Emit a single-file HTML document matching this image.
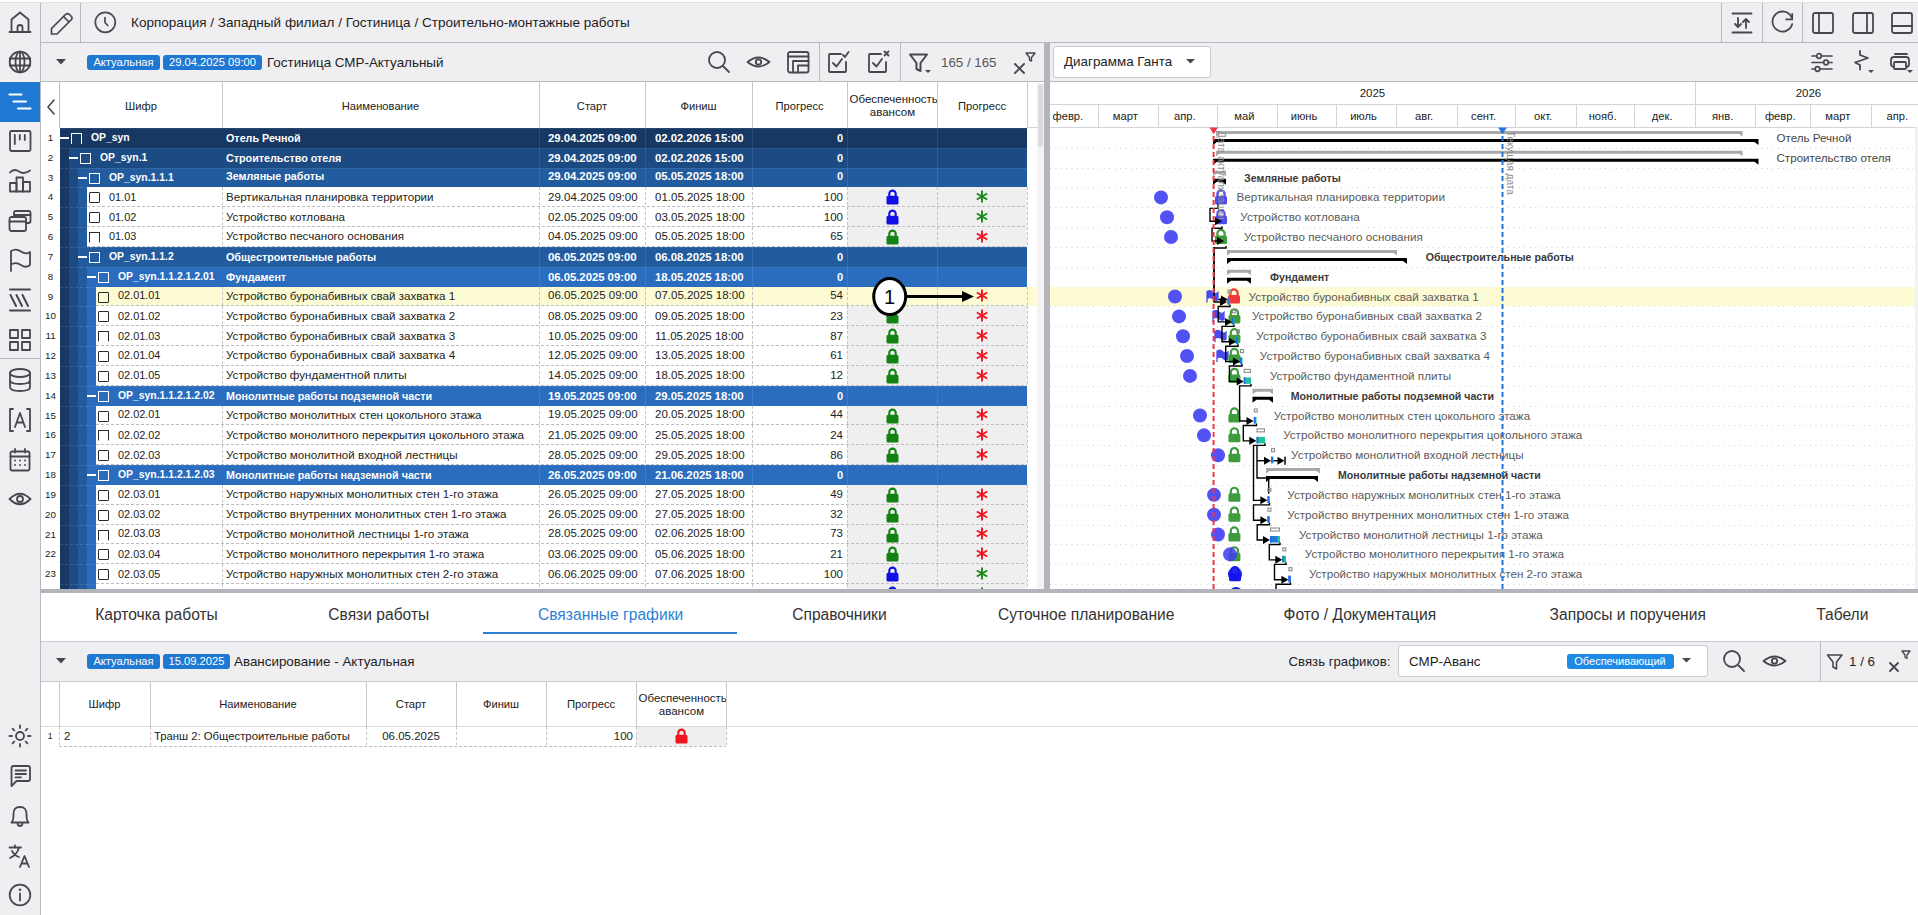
<!DOCTYPE html><html><head><meta charset="utf-8"><style>
html,body{margin:0;padding:0;}
body{width:1918px;height:915px;overflow:hidden;position:relative;background:#fff;font-family:"Liberation Sans",sans-serif;color:#222;}
div{box-sizing:border-box;}
svg{display:block}
</style></head><body>
<div style="position:absolute;left:0px;top:0px;width:1918px;height:2px;background:#fff"></div>
<div style="position:absolute;left:0px;top:2px;width:1918px;height:1px;background:#e3e3e6"></div>
<div style="position:absolute;left:0px;top:3px;width:1918px;height:39px;background:#efeff2"></div>
<div style="position:absolute;left:41px;top:42px;width:1877px;height:1px;background:#b9bac1"></div>
<div style="position:absolute;left:41px;top:43px;width:1877px;height:38px;background:#efeff2"></div>
<div style="position:absolute;left:41px;top:81px;width:1877px;height:1px;background:#b9bac1"></div>
<div style="position:absolute;left:0px;top:3px;width:40px;height:912px;background:#efeff2"></div>
<div style="position:absolute;left:40px;top:3px;width:1px;height:912px;background:#b9bac1"></div>
<div style="position:absolute;left:0px;top:82px;width:40px;height:40px;background:#1f78d1"></div>
<div style="position:absolute;left:0px;top:358px;width:40px;height:1px;background:#b9bac1"></div>
<div style="position:absolute;left:80px;top:3px;width:1px;height:39px;background:#b9bac1"></div>
<div style="position:absolute;left:1721px;top:3px;width:1px;height:39px;background:#b9bac1"></div>
<div style="position:absolute;left:1762px;top:3px;width:1px;height:39px;background:#b9bac1"></div>
<div style="position:absolute;left:1802px;top:3px;width:1px;height:39px;background:#b9bac1"></div>
<svg style="position:absolute;left:48px;top:10px;overflow:visible" width="26" height="26" viewBox="0 0 26 26" fill="none" stroke="#47474d" stroke-width="1.7" stroke-linecap="round" stroke-linejoin="round" ><path d="M3.5 23.5 L3.5 18.5 L17.5 4.5 Q19.5 2.5 21.5 4.5 L23 6 Q25 8 23 10 L9 24 L3.5 24 Z"/><path d="M15.5 6.5 L21 12"/></svg>
<svg style="position:absolute;left:93px;top:10px;overflow:visible" width="24" height="24" viewBox="0 0 24 24" fill="none" stroke="#47474d" stroke-width="1.7" stroke-linecap="round" stroke-linejoin="round" ><circle cx="12.3" cy="12.3" r="10"/><path d="M12 7.5 L12 12.5 L14.8 15.5"/></svg>
<div style="position:absolute;left:131px;top:13.7px;height:18px;line-height:18px;white-space:nowrap;font-size:13.55px;color:#1e1e1e">Корпорация / Западный филиал / Гостиница / Строительно-монтажные работы</div>
<svg style="position:absolute;left:1731px;top:12px;overflow:visible" width="22" height="22" viewBox="0 0 22 22" fill="none" stroke="#47474d" stroke-width="1.8" stroke-linecap="round" stroke-linejoin="round" ><path d="M1.5 1.5 H20.5 M1.5 20.5 H20.5"/><path d="M7 6 V15 M4 12 L7 15 L10 12"/><path d="M15 16 V7 M12 10 L15 7 L18 10"/></svg>
<svg style="position:absolute;left:1771.4px;top:11.4px;overflow:visible" width="22" height="22" viewBox="0 0 22 22" fill="none" stroke="#47474d" stroke-width="1.8" stroke-linecap="round" stroke-linejoin="round" ><path d="M21.2 13.1 A10 10 0 1 1 20.5 6.1"/><path d="M21.2 2.8 V8.4 H15.2"/></svg>
<svg style="position:absolute;left:1811.5px;top:11.5px;overflow:visible" width="22" height="22" viewBox="0 0 22 22" fill="none" stroke="#47474d" stroke-width="1.8" stroke-linecap="round" stroke-linejoin="round" ><rect x="1" y="1" width="20" height="20" rx="2"/><path d="M7 1 V21"/></svg>
<svg style="position:absolute;left:1851.5px;top:11.5px;overflow:visible" width="22" height="22" viewBox="0 0 22 22" fill="none" stroke="#47474d" stroke-width="1.8" stroke-linecap="round" stroke-linejoin="round" ><rect x="1" y="1" width="20" height="20" rx="2"/><path d="M15 1 V21"/></svg>
<svg style="position:absolute;left:1891px;top:11.5px;overflow:visible" width="22" height="22" viewBox="0 0 22 22" fill="none" stroke="#47474d" stroke-width="1.8" stroke-linecap="round" stroke-linejoin="round" ><rect x="1" y="1" width="20" height="20" rx="2"/><path d="M1 14 H21"/></svg>
<svg style="position:absolute;left:8px;top:10px;overflow:visible" width="24" height="24" viewBox="0 0 24 24" fill="none" stroke="#47474d" stroke-width="1.8" stroke-linecap="round" stroke-linejoin="round" ><path d="M1.5 22 H22.5"/><path d="M3.5 22 V9.5 L12 2.5 L20.5 9.5 V22"/><path d="M9.5 22 V17.5 A2.5 2.5 0 0 1 14.5 17.5 V22"/></svg>
<svg style="position:absolute;left:8px;top:50px;overflow:visible" width="24" height="24" viewBox="0 0 24 24" fill="none" stroke="#47474d" stroke-width="1.8" stroke-linecap="round" stroke-linejoin="round" ><circle cx="12" cy="12" r="10.3"/><ellipse cx="12" cy="12" rx="4.5" ry="10.3"/><path d="M1.7 8.5 H22.3 M1.7 15.5 H22.3 M12 1.7 V22.3"/></svg>
<svg style="position:absolute;left:8px;top:90px;overflow:visible" width="24" height="24" viewBox="0 0 24 24" fill="none" stroke="#fff" stroke-width="2.2" stroke-linecap="round" stroke-linejoin="round" ><path d="M1.5 4.5 H13.5 M5.5 11.5 H18 M10 18.5 H22.5"/></svg>
<svg style="position:absolute;left:8px;top:129px;overflow:visible" width="24" height="24" viewBox="0 0 24 24" fill="none" stroke="#47474d" stroke-width="1.8" stroke-linecap="round" stroke-linejoin="round" ><rect x="2" y="2" width="20.5" height="20" rx="1.5"/><path d="M6.8 6 V15 M11.8 6 V10.5 M16.8 6 V11"/></svg>
<svg style="position:absolute;left:8px;top:169px;overflow:visible" width="24" height="24" viewBox="0 0 24 24" fill="none" stroke="#47474d" stroke-width="1.8" stroke-linecap="round" stroke-linejoin="round" ><path d="M2 3.5 Q6 -1 11 2.5 Q16 6 22 1.5"/><rect x="2" y="14" width="6.5" height="8.5"/><rect x="8.5" y="8.5" width="6.5" height="14"/><rect x="15" y="13" width="7" height="9.5"/></svg>
<svg style="position:absolute;left:8px;top:209px;overflow:visible" width="24" height="24" viewBox="0 0 24 24" fill="none" stroke="#47474d" stroke-width="1.8" stroke-linecap="round" stroke-linejoin="round" ><path d="M6 6 V4 Q6 2 8 2 H20.5 Q22.5 2 22.5 4 V12 Q22.5 14 20.5 14 H18"/><rect x="1.5" y="8" width="16.5" height="14" rx="2"/><path d="M1.5 12.5 H18"/><path d="M6 6 H22.5"/></svg>
<svg style="position:absolute;left:8px;top:248px;overflow:visible" width="24" height="24" viewBox="0 0 24 24" fill="none" stroke="#47474d" stroke-width="1.8" stroke-linecap="round" stroke-linejoin="round" ><path d="M3 23 V3 Q8 0 13 3.5 Q18 7 22 4 V17 Q18 20.5 13 17 Q8 13.5 3 16.5"/></svg>
<svg style="position:absolute;left:8px;top:288px;overflow:visible" width="24" height="24" viewBox="0 0 24 24" fill="none" stroke="#47474d" stroke-width="2" stroke-linecap="round" stroke-linejoin="round" ><path d="M2 1.5 H22 M2 22.5 H22"/><path d="M2.5 7 L8 18 M8.5 7 L14 18 M14.5 7 L20 18"/></svg>
<svg style="position:absolute;left:8px;top:328px;overflow:visible" width="24" height="24" viewBox="0 0 24 24" fill="none" stroke="#47474d" stroke-width="1.8" stroke-linecap="round" stroke-linejoin="round" ><rect x="2" y="2" width="8" height="8"/><rect x="14" y="2" width="8" height="8"/><rect x="2" y="14" width="8" height="8"/><rect x="14" y="14" width="8" height="8"/></svg>
<svg style="position:absolute;left:8px;top:368px;overflow:visible" width="24" height="24" viewBox="0 0 24 24" fill="none" stroke="#47474d" stroke-width="1.8" stroke-linecap="round" stroke-linejoin="round" ><ellipse cx="12" cy="5" rx="10" ry="4"/><path d="M2 5 V19 Q2 23 12 23 Q22 23 22 19 V5 M2 12 Q2 16 12 16 Q22 16 22 12"/></svg>
<svg style="position:absolute;left:8px;top:408px;overflow:visible" width="24" height="24" viewBox="0 0 24 24" fill="none" stroke="#47474d" stroke-width="1.8" stroke-linecap="round" stroke-linejoin="round" ><path d="M5 1 H2 V23 H5 M19 1 H22 V23 H19"/><path d="M7 19 L12 5 L17 19 M8.6 14.5 H15.4"/></svg>
<svg style="position:absolute;left:8px;top:448px;overflow:visible" width="24" height="24" viewBox="0 0 24 24" fill="none" stroke="#47474d" stroke-width="1.8" stroke-linecap="round" stroke-linejoin="round" ><rect x="2.5" y="3.5" width="19" height="19" rx="1.5"/><path d="M2.5 8.5 H21.5 M7 1 V4.5 M17 1 V4.5"/><path d="M7 12.5 h0.1 M12 12.5 h0.1 M17 12.5 h0.1 M7 17 h0.1 M12 17 h0.1 M17 17 h0.1"/></svg>
<svg style="position:absolute;left:8px;top:487px;overflow:visible" width="24" height="24" viewBox="0 0 24 24" fill="none" stroke="#47474d" stroke-width="1.8" stroke-linecap="round" stroke-linejoin="round" ><path d="M1.5 12 Q12 1.5 22.5 12 Q12 22.5 1.5 12 Z"/><circle cx="12" cy="12" r="3"/></svg>
<svg style="position:absolute;left:8px;top:724px;overflow:visible" width="24" height="24" viewBox="0 0 24 24" fill="none" stroke="#47474d" stroke-width="1.8" stroke-linecap="round" stroke-linejoin="round" ><circle cx="12" cy="12" r="4"/><path d="M12 1.5 V4 M12 20 V22.5 M1.5 12 H4 M20 12 H22.5 M4.6 4.6 L6.3 6.3 M17.7 17.7 L19.4 19.4 M4.6 19.4 L6.3 17.7 M17.7 6.3 L19.4 4.6"/></svg>
<svg style="position:absolute;left:8px;top:764px;overflow:visible" width="24" height="24" viewBox="0 0 24 24" fill="none" stroke="#47474d" stroke-width="1.8" stroke-linecap="round" stroke-linejoin="round" ><path d="M3.5 22 V4 Q3.5 2 5.5 2 H20 Q22 2 22 4 V15 Q22 17 20 17 H8.5 Z"/><path d="M7.5 6.5 H18 M7.5 10 H18 M7.5 13.3 H13"/></svg>
<svg style="position:absolute;left:8px;top:804px;overflow:visible" width="24" height="24" viewBox="0 0 24 24" fill="none" stroke="#47474d" stroke-width="1.8" stroke-linecap="round" stroke-linejoin="round" ><path d="M3.5 18.5 H20.5 Q18.5 16.5 18.5 12 V10 Q18.5 3 12 3 Q5.5 3 5.5 10 V12 Q5.5 16.5 3.5 18.5 Z"/><path d="M9.5 19 Q9.5 22 12 22 Q14.5 22 14.5 19"/></svg>
<svg style="position:absolute;left:8px;top:844px;overflow:visible" width="24" height="24" viewBox="0 0 24 24" fill="none" stroke="#47474d" stroke-width="1.8" stroke-linecap="round" stroke-linejoin="round" ><path d="M1.5 3.5 H13 M7 1.5 V3.5 M11 3.5 Q9 11 2 14 M4 7 Q7 12 11 13"/><path d="M12 23 L16.5 12 L21 23 M13.5 19.5 H19.5"/></svg>
<svg style="position:absolute;left:8px;top:883px;overflow:visible" width="24" height="24" viewBox="0 0 24 24" fill="none" stroke="#47474d" stroke-width="1.8" stroke-linecap="round" stroke-linejoin="round" ><circle cx="12" cy="12" r="10.3"/><path d="M12 10.5 V17.5"/><path d="M12 6.8 h0.01" stroke-width="2.6"/></svg>
<svg style="position:absolute;left:55px;top:58px;overflow:visible" width="12" height="8" viewBox="0 0 12 8" fill="none" stroke="#47474d" stroke-width="1.7" stroke-linecap="round" stroke-linejoin="round" ><path d="M1 1 H11 L6 6.5 Z" fill="#47474d" stroke="none"/></svg>
<div style="position:absolute;left:87px;top:55px;width:73px;height:15px;background:#1f78d1;border-radius:3px;color:#fff;font-size:11.2px;line-height:15px;text-align:center;white-space:nowrap">Актуальная</div>
<div style="position:absolute;left:163px;top:55px;width:99px;height:15px;background:#1f78d1;border-radius:3px;color:#fff;font-size:11.2px;line-height:15px;text-align:center;white-space:nowrap">29.04.2025 09:00</div>
<div style="position:absolute;left:267px;top:53.5px;height:18px;line-height:18px;white-space:nowrap;font-size:13.4px;color:#1e1e1e">Гостиница СМР-Актуальный</div>
<svg style="position:absolute;left:707px;top:50px;overflow:visible" width="24" height="24" viewBox="0 0 24 24" fill="none" stroke="#47474d" stroke-width="1.8" stroke-linecap="round" stroke-linejoin="round" ><circle cx="10" cy="10" r="8"/><path d="M16 16 L22 22"/></svg>
<svg style="position:absolute;left:746px;top:50px;overflow:visible" width="25" height="24" viewBox="0 0 25 24" fill="none" stroke="#47474d" stroke-width="1.8" stroke-linecap="round" stroke-linejoin="round" ><path d="M1.5 12 Q12.5 3 23.5 12 Q12.5 21 1.5 12 Z"/><circle cx="12.5" cy="12" r="2.7"/></svg>
<svg style="position:absolute;left:787px;top:51px;overflow:visible" width="23" height="23" viewBox="0 0 23 23" fill="none" stroke="#47474d" stroke-width="1.8" stroke-linecap="round" stroke-linejoin="round" ><rect x="1" y="1" width="20.5" height="20.5" rx="2"/><path d="M1 5.5 H21.5 M6 21.5 V10 H21.5 M11 21.5 V14.5 H21.5"/></svg>
<div style="position:absolute;left:819px;top:43px;width:1px;height:38px;background:#b9bac1"></div>
<svg style="position:absolute;left:827px;top:50px;overflow:visible" width="24" height="24" viewBox="0 0 24 24" fill="none" stroke="#47474d" stroke-width="1.8" stroke-linecap="round" stroke-linejoin="round" ><path d="M14 4 H3 Q2 4 2 5 V21 Q2 22 3 22 H18 Q19 22 19 21 V12"/><path d="M6 13 L9.5 16.5 L15 9"/><path d="M16 5 L18 7 L21.5 2"/></svg>
<svg style="position:absolute;left:867px;top:50px;overflow:visible" width="24" height="24" viewBox="0 0 24 24" fill="none" stroke="#47474d" stroke-width="1.8" stroke-linecap="round" stroke-linejoin="round" ><path d="M14 4 H3 Q2 4 2 5 V21 Q2 22 3 22 H18 Q19 22 19 21 V12"/><path d="M6 13 L9.5 16.5 L15 9"/><path d="M17.5 1.5 L21.5 5.5 M21.5 1.5 L17.5 5.5"/></svg>
<div style="position:absolute;left:899.5px;top:43px;width:1px;height:38px;background:#b9bac1"></div>
<svg style="position:absolute;left:908px;top:52px;overflow:visible" width="24" height="24" viewBox="0 0 24 24" fill="none" stroke="#47474d" stroke-width="2" stroke-linecap="round" stroke-linejoin="round" ><path d="M2 2.5 H19 L12.5 11 V19 L8.5 17 V11 Z"/></svg>
<svg style="position:absolute;left:925px;top:70px;overflow:visible" width="6" height="4" viewBox="0 0 6 4" fill="none" stroke="#47474d" stroke-width="1.7" stroke-linecap="round" stroke-linejoin="round" ><path d="M0 0 H6 L3 3 Z" fill="#47474d" stroke="none"/></svg>
<div style="position:absolute;left:941px;top:54px;height:18px;line-height:18px;white-space:nowrap;font-size:13.3px;color:#555">165 / 165</div>
<svg style="position:absolute;left:1013px;top:51px;overflow:visible" width="24" height="26" viewBox="0 0 24 26" fill="none" stroke="#47474d" stroke-width="1.9" stroke-linecap="round" stroke-linejoin="round" ><path d="M2 13 L11 22 M11 13 L2 22"/><path d="M13 2 H22 L18.5 6.5 V10 L16.5 9 V6.5 Z" stroke-width="1.4"/></svg>
<div style="position:absolute;left:1044px;top:43px;width:6px;height:546px;background:#b4b5bb"></div>
<div style="position:absolute;left:1053px;top:46px;width:158px;height:31.5px;background:#fff;border:1px solid #c9c9cf;border-radius:3px"></div>
<div style="position:absolute;left:1064px;top:53px;height:18px;line-height:18px;white-space:nowrap;font-size:13.4px;color:#1e1e1e">Диаграмма Ганта</div>
<svg style="position:absolute;left:1185px;top:58px;overflow:visible" width="12" height="8" viewBox="0 0 12 8" fill="none" stroke="#47474d" stroke-width="1.7" stroke-linecap="round" stroke-linejoin="round" ><path d="M1 1 H10 L5.5 5.5 Z" fill="#47474d" stroke="none"/></svg>
<svg style="position:absolute;left:1811px;top:51px;overflow:visible" width="22" height="22" viewBox="0 0 22 22" fill="none" stroke="#47474d" stroke-width="1.7" stroke-linecap="round" stroke-linejoin="round" ><path d="M1 5 H21 M1 11.5 H21 M1 18 H21"/><circle cx="8" cy="5" r="2.3" fill="#efeff2"/><circle cx="15" cy="11.5" r="2.3" fill="#efeff2"/><circle cx="6.5" cy="18" r="2.3" fill="#efeff2"/></svg>
<svg style="position:absolute;left:1851px;top:50px;overflow:visible" width="22" height="24" viewBox="0 0 22 24" fill="none" stroke="#47474d" stroke-width="1.8" stroke-linecap="round" stroke-linejoin="round" ><path d="M9 1 V5 L17 8 L4 12.5 L9 15 V19.5"/></svg>
<svg style="position:absolute;left:1868px;top:70px;overflow:visible" width="6" height="4" viewBox="0 0 6 4" fill="none" stroke="#47474d" stroke-width="1.7" stroke-linecap="round" stroke-linejoin="round" ><path d="M0 0 H6 L3 3 Z" fill="#47474d" stroke="none"/></svg>
<svg style="position:absolute;left:1890px;top:51px;overflow:visible" width="22" height="22" viewBox="0 0 22 22" fill="none" stroke="#47474d" stroke-width="1.8" stroke-linecap="round" stroke-linejoin="round" ><path d="M5 3 H17"/><rect x="1" y="6" width="18" height="10" rx="3"/><rect x="4" y="11" width="12" height="7" rx="1" fill="#efeff2"/></svg>
<svg style="position:absolute;left:1907px;top:70px;overflow:visible" width="6" height="4" viewBox="0 0 6 4" fill="none" stroke="#47474d" stroke-width="1.7" stroke-linecap="round" stroke-linejoin="round" ><path d="M0 0 H6 L3 3 Z" fill="#47474d" stroke="none"/></svg>
<div style="position:absolute;left:41px;top:82px;width:1003px;height:507px;background:#fff"></div>
<div style="position:absolute;left:59px;top:82px;width:1px;height:46px;background:#b9bac1"></div>
<svg style="position:absolute;left:45px;top:97.5px;overflow:visible" width="12" height="18" viewBox="0 0 12 18" fill="none" stroke="#47474d" stroke-width="1.6" stroke-linecap="round" stroke-linejoin="round" ><path d="M9 2 L3 9 L9 16"/></svg>
<div style="position:absolute;left:222px;top:82px;width:1px;height:46px;background:#c8c9cf"></div>
<div style="position:absolute;left:60px;top:97px;width:162px;height:18px;line-height:18px;white-space:nowrap;font-size:11.2px;color:#222;text-align:center">Шифр</div>
<div style="position:absolute;left:539px;top:82px;width:1px;height:46px;background:#c8c9cf"></div>
<div style="position:absolute;left:222px;top:97px;width:317px;height:18px;line-height:18px;white-space:nowrap;font-size:11.2px;color:#222;text-align:center">Наименование</div>
<div style="position:absolute;left:645px;top:82px;width:1px;height:46px;background:#c8c9cf"></div>
<div style="position:absolute;left:539px;top:97px;width:106px;height:18px;line-height:18px;white-space:nowrap;font-size:11.2px;color:#222;text-align:center">Старт</div>
<div style="position:absolute;left:752px;top:82px;width:1px;height:46px;background:#c8c9cf"></div>
<div style="position:absolute;left:645px;top:97px;width:107px;height:18px;line-height:18px;white-space:nowrap;font-size:11.2px;color:#222;text-align:center">Финиш</div>
<div style="position:absolute;left:847px;top:82px;width:1px;height:46px;background:#c8c9cf"></div>
<div style="position:absolute;left:752px;top:97px;width:95px;height:18px;line-height:18px;white-space:nowrap;font-size:11.2px;color:#222;text-align:center">Прогресс</div>
<div style="position:absolute;left:937px;top:82px;width:1px;height:46px;background:#c8c9cf"></div>
<div style="position:absolute;left:848px;top:93px;width:89px;height:28px;overflow:hidden;font-size:11.5px;line-height:13px;color:#222;white-space:nowrap"><div style="position:absolute;left:1.5px;top:0">Обеспеченность</div><div style="position:absolute;left:0;width:100%;top:13px;text-align:center">авансом</div></div>
<div style="position:absolute;left:1027px;top:82px;width:1px;height:46px;background:#c8c9cf"></div>
<div style="position:absolute;left:937px;top:97px;width:90px;height:18px;line-height:18px;white-space:nowrap;font-size:11.2px;color:#222;text-align:center">Прогресс</div>
<div style="position:absolute;left:1028px;top:82px;width:16px;height:507px;background:#fff"></div>
<div style="position:absolute;left:1037px;top:83px;width:7px;height:506px;background:#f3f3f5"></div>
<div style="position:absolute;left:1038px;top:84px;width:5px;height:63px;background:#dcdce0;border-radius:3px"></div>
<div style="position:absolute;left:1028px;top:287.14px;width:10px;height:18.83px;background:#fdfbd3"></div>
<div style="position:absolute;left:1028px;top:127px;width:10px;height:1px;background:#d6d6da"></div>
<div style="position:absolute;left:41px;top:128px;width:988px;height:461px;overflow:hidden">
<div style="position:absolute;left:0px;top:0px;width:19px;height:20px;line-height:20px;white-space:nowrap;font-size:9.8px;color:#222;text-align:center">1</div>
<div style="position:absolute;left:19px;top:0px;width:967px;height:20px;background:#163862"></div>
<div style="position:absolute;left:19px;top:0px;width:967px;height:1px;background:rgba(255,255,255,0.08)"></div>
<div style="position:absolute;left:498px;top:0px;width:1px;height:20px;background:rgba(255,255,255,0.10)"></div>
<div style="position:absolute;left:604px;top:0px;width:1px;height:20px;background:rgba(255,255,255,0.10)"></div>
<div style="position:absolute;left:711px;top:0px;width:1px;height:20px;background:rgba(255,255,255,0.10)"></div>
<div style="position:absolute;left:806px;top:0px;width:1px;height:20px;background:rgba(255,255,255,0.10)"></div>
<div style="position:absolute;left:896px;top:0px;width:1px;height:20px;background:rgba(255,255,255,0.10)"></div>
<div style="position:absolute;left:19px;top:9px;width:9px;height:2px;background:#fff"></div>
<div style="position:absolute;left:30px;top:5px;width:11px;height:11px;border:1.1px solid #fff;border-bottom:none"></div>
<div style="position:absolute;left:50px;top:0.4px;height:20px;line-height:20px;white-space:nowrap;font-size:10.4px;font-weight:bold;color:#fff">OP_syn</div>
<div style="position:absolute;left:185px;top:-0.1px;height:20px;line-height:20px;white-space:nowrap;font-size:10.75px;font-weight:bold;color:#fff">Отель Речной</div>
<div style="position:absolute;left:507px;top:-0.1px;height:20px;line-height:20px;white-space:nowrap;font-size:11.4px;font-weight:bold;color:#fff;letter-spacing:-0.05px">29.04.2025 09:00</div>
<div style="position:absolute;left:614px;top:-0.1px;height:20px;line-height:20px;white-space:nowrap;font-size:11.4px;font-weight:bold;color:#fff;letter-spacing:-0.05px">02.02.2026 15:00</div>
<div style="position:absolute;left:711px;top:-0.1px;width:91px;height:20px;line-height:20px;white-space:nowrap;font-size:11px;font-weight:bold;color:#fff;text-align:right">0</div>
<div style="position:absolute;left:0px;top:20px;width:19px;height:20px;line-height:20px;white-space:nowrap;font-size:9.8px;color:#222;text-align:center">2</div>
<div style="position:absolute;left:19px;top:20px;width:9px;height:20px;background:#163862"></div>
<div style="position:absolute;left:19px;top:20px;width:9px;height:1px;background-image:linear-gradient(90deg,rgba(255,255,255,0.13) 3px,transparent 3px);background-size:5px 1px"></div>
<div style="position:absolute;left:28px;top:20px;width:958px;height:20px;background:#1c4a82"></div>
<div style="position:absolute;left:28px;top:20px;width:958px;height:1px;background:rgba(255,255,255,0.08)"></div>
<div style="position:absolute;left:498px;top:20px;width:1px;height:20px;background:rgba(255,255,255,0.10)"></div>
<div style="position:absolute;left:604px;top:20px;width:1px;height:20px;background:rgba(255,255,255,0.10)"></div>
<div style="position:absolute;left:711px;top:20px;width:1px;height:20px;background:rgba(255,255,255,0.10)"></div>
<div style="position:absolute;left:806px;top:20px;width:1px;height:20px;background:rgba(255,255,255,0.10)"></div>
<div style="position:absolute;left:896px;top:20px;width:1px;height:20px;background:rgba(255,255,255,0.10)"></div>
<div style="position:absolute;left:28px;top:29px;width:9px;height:2px;background:#fff"></div>
<div style="position:absolute;left:39px;top:25px;width:11px;height:11px;border:1.1px solid #fff"></div>
<div style="position:absolute;left:59px;top:20.4px;height:20px;line-height:20px;white-space:nowrap;font-size:10.4px;font-weight:bold;color:#fff">OP_syn.1</div>
<div style="position:absolute;left:185px;top:19.9px;height:20px;line-height:20px;white-space:nowrap;font-size:10.75px;font-weight:bold;color:#fff">Строительство отеля</div>
<div style="position:absolute;left:507px;top:19.9px;height:20px;line-height:20px;white-space:nowrap;font-size:11.4px;font-weight:bold;color:#fff;letter-spacing:-0.05px">29.04.2025 09:00</div>
<div style="position:absolute;left:614px;top:19.9px;height:20px;line-height:20px;white-space:nowrap;font-size:11.4px;font-weight:bold;color:#fff;letter-spacing:-0.05px">02.02.2026 15:00</div>
<div style="position:absolute;left:711px;top:19.9px;width:91px;height:20px;line-height:20px;white-space:nowrap;font-size:11px;font-weight:bold;color:#fff;text-align:right">0</div>
<div style="position:absolute;left:0px;top:40px;width:19px;height:19px;line-height:19px;white-space:nowrap;font-size:9.8px;color:#222;text-align:center">3</div>
<div style="position:absolute;left:19px;top:40px;width:9px;height:19px;background:#163862"></div>
<div style="position:absolute;left:28px;top:40px;width:9px;height:19px;background:#1c4a82"></div>
<div style="position:absolute;left:19px;top:40px;width:18px;height:1px;background-image:linear-gradient(90deg,rgba(255,255,255,0.13) 3px,transparent 3px);background-size:5px 1px"></div>
<div style="position:absolute;left:37px;top:40px;width:949px;height:19px;background:#225c9e"></div>
<div style="position:absolute;left:37px;top:40px;width:949px;height:1px;background:rgba(255,255,255,0.08)"></div>
<div style="position:absolute;left:498px;top:40px;width:1px;height:19px;background:rgba(255,255,255,0.10)"></div>
<div style="position:absolute;left:604px;top:40px;width:1px;height:19px;background:rgba(255,255,255,0.10)"></div>
<div style="position:absolute;left:711px;top:40px;width:1px;height:19px;background:rgba(255,255,255,0.10)"></div>
<div style="position:absolute;left:806px;top:40px;width:1px;height:19px;background:rgba(255,255,255,0.10)"></div>
<div style="position:absolute;left:896px;top:40px;width:1px;height:19px;background:rgba(255,255,255,0.10)"></div>
<div style="position:absolute;left:37px;top:49px;width:9px;height:2px;background:#fff"></div>
<div style="position:absolute;left:48px;top:45px;width:11px;height:11px;border:1.1px solid #fff"></div>
<div style="position:absolute;left:68px;top:39.9px;height:19px;line-height:19px;white-space:nowrap;font-size:10.4px;font-weight:bold;color:#fff">OP_syn.1.1.1</div>
<div style="position:absolute;left:185px;top:39.4px;height:19px;line-height:19px;white-space:nowrap;font-size:10.75px;font-weight:bold;color:#fff">Земляные работы</div>
<div style="position:absolute;left:507px;top:39.4px;height:19px;line-height:19px;white-space:nowrap;font-size:11.4px;font-weight:bold;color:#fff;letter-spacing:-0.05px">29.04.2025 09:00</div>
<div style="position:absolute;left:614px;top:39.4px;height:19px;line-height:19px;white-space:nowrap;font-size:11.4px;font-weight:bold;color:#fff;letter-spacing:-0.05px">05.05.2025 18:00</div>
<div style="position:absolute;left:711px;top:39.4px;width:91px;height:19px;line-height:19px;white-space:nowrap;font-size:11px;font-weight:bold;color:#fff;text-align:right">0</div>
<div style="position:absolute;left:0px;top:59px;width:19px;height:20px;line-height:20px;white-space:nowrap;font-size:9.8px;color:#222;text-align:center">4</div>
<div style="position:absolute;left:19px;top:59px;width:9px;height:20px;background:#163862"></div>
<div style="position:absolute;left:28px;top:59px;width:9px;height:20px;background:#1c4a82"></div>
<div style="position:absolute;left:37px;top:59px;width:9px;height:20px;background:#225c9e"></div>
<div style="position:absolute;left:19px;top:59px;width:27px;height:1px;background-image:linear-gradient(90deg,rgba(255,255,255,0.13) 3px,transparent 3px);background-size:5px 1px"></div>
<div style="position:absolute;left:46px;top:59px;width:760px;height:20px;background:#fff"></div>
<div style="position:absolute;left:806px;top:59px;width:180px;height:20px;background:#efefef"></div>
<div style="position:absolute;left:46px;top:78px;width:940px;height:1px;background-image:linear-gradient(90deg,#bdbdc1 3px,transparent 3px);background-size:5px 1px"></div>
<div style="position:absolute;left:181px;top:59px;width:1px;height:20px;background-image:linear-gradient(180deg,#c6c6ca 3px,transparent 3px);background-size:1px 5px"></div>
<div style="position:absolute;left:498px;top:59px;width:1px;height:20px;background-image:linear-gradient(180deg,#c6c6ca 3px,transparent 3px);background-size:1px 5px"></div>
<div style="position:absolute;left:604px;top:59px;width:1px;height:20px;background-image:linear-gradient(180deg,#c6c6ca 3px,transparent 3px);background-size:1px 5px"></div>
<div style="position:absolute;left:711px;top:59px;width:1px;height:20px;background-image:linear-gradient(180deg,#c6c6ca 3px,transparent 3px);background-size:1px 5px"></div>
<div style="position:absolute;left:806px;top:59px;width:1px;height:20px;background-image:linear-gradient(180deg,#c6c6ca 3px,transparent 3px);background-size:1px 5px"></div>
<div style="position:absolute;left:896px;top:59px;width:1px;height:20px;background-image:linear-gradient(180deg,#c6c6ca 3px,transparent 3px);background-size:1px 5px"></div>
<div style="position:absolute;left:986px;top:59px;width:1px;height:20px;background-image:linear-gradient(180deg,#c6c6ca 3px,transparent 3px);background-size:1px 5px"></div>
<div style="position:absolute;left:48px;top:64px;width:11px;height:11px;border:1.3px solid #2a2a2a;border-radius:1px"></div>
<div style="position:absolute;left:68px;top:58.9px;height:20px;line-height:20px;white-space:nowrap;font-size:10.9px;color:#222">01.01</div>
<div style="position:absolute;left:185px;top:58.9px;height:20px;line-height:20px;white-space:nowrap;font-size:11.6px;color:#222">Вертикальная планировка территории</div>
<div style="position:absolute;left:507px;top:58.9px;height:20px;line-height:20px;white-space:nowrap;font-size:11.5px;color:#222">29.04.2025 09:00</div>
<div style="position:absolute;left:614px;top:58.9px;height:20px;line-height:20px;white-space:nowrap;font-size:11.5px;color:#222">01.05.2025 18:00</div>
<div style="position:absolute;left:711px;top:58.9px;width:91px;height:20px;line-height:20px;white-space:nowrap;font-size:11.5px;color:#222;text-align:right">100</div>
<svg style="position:absolute;left:844.50px;top:61.00px" width="13.00" height="16.00" viewBox="0 0 13 16"><path d="M3.3 7 V4.8 A3.2 3.2 0 0 1 9.7 4.8 V7" fill="none" stroke="#1010e6" stroke-width="2.1"/><rect x="0.5" y="6.8" width="12" height="8.7" rx="1.6" fill="#1010e6"/></svg>
<svg style="position:absolute;left:935px;top:61.5px" width="12" height="13" viewBox="0 0 12 13" stroke="#1a8a1a" stroke-width="1.9" stroke-linecap="butt"><path d="M6 0.5 V12.5 M0.8 3.5 L11.2 9.5 M0.8 9.5 L11.2 3.5"/></svg>
<div style="position:absolute;left:0px;top:79px;width:19px;height:20px;line-height:20px;white-space:nowrap;font-size:9.8px;color:#222;text-align:center">5</div>
<div style="position:absolute;left:19px;top:79px;width:9px;height:20px;background:#163862"></div>
<div style="position:absolute;left:28px;top:79px;width:9px;height:20px;background:#1c4a82"></div>
<div style="position:absolute;left:37px;top:79px;width:9px;height:20px;background:#225c9e"></div>
<div style="position:absolute;left:19px;top:79px;width:27px;height:1px;background-image:linear-gradient(90deg,rgba(255,255,255,0.13) 3px,transparent 3px);background-size:5px 1px"></div>
<div style="position:absolute;left:46px;top:79px;width:760px;height:20px;background:#fff"></div>
<div style="position:absolute;left:806px;top:79px;width:180px;height:20px;background:#efefef"></div>
<div style="position:absolute;left:46px;top:98px;width:940px;height:1px;background-image:linear-gradient(90deg,#bdbdc1 3px,transparent 3px);background-size:5px 1px"></div>
<div style="position:absolute;left:181px;top:79px;width:1px;height:20px;background-image:linear-gradient(180deg,#c6c6ca 3px,transparent 3px);background-size:1px 5px"></div>
<div style="position:absolute;left:498px;top:79px;width:1px;height:20px;background-image:linear-gradient(180deg,#c6c6ca 3px,transparent 3px);background-size:1px 5px"></div>
<div style="position:absolute;left:604px;top:79px;width:1px;height:20px;background-image:linear-gradient(180deg,#c6c6ca 3px,transparent 3px);background-size:1px 5px"></div>
<div style="position:absolute;left:711px;top:79px;width:1px;height:20px;background-image:linear-gradient(180deg,#c6c6ca 3px,transparent 3px);background-size:1px 5px"></div>
<div style="position:absolute;left:806px;top:79px;width:1px;height:20px;background-image:linear-gradient(180deg,#c6c6ca 3px,transparent 3px);background-size:1px 5px"></div>
<div style="position:absolute;left:896px;top:79px;width:1px;height:20px;background-image:linear-gradient(180deg,#c6c6ca 3px,transparent 3px);background-size:1px 5px"></div>
<div style="position:absolute;left:986px;top:79px;width:1px;height:20px;background-image:linear-gradient(180deg,#c6c6ca 3px,transparent 3px);background-size:1px 5px"></div>
<div style="position:absolute;left:48px;top:84px;width:11px;height:11px;border:1.3px solid #2a2a2a;border-radius:1px"></div>
<div style="position:absolute;left:68px;top:78.9px;height:20px;line-height:20px;white-space:nowrap;font-size:10.9px;color:#222">01.02</div>
<div style="position:absolute;left:185px;top:78.9px;height:20px;line-height:20px;white-space:nowrap;font-size:11.6px;color:#222">Устройство котлована</div>
<div style="position:absolute;left:507px;top:78.9px;height:20px;line-height:20px;white-space:nowrap;font-size:11.5px;color:#222">02.05.2025 09:00</div>
<div style="position:absolute;left:614px;top:78.9px;height:20px;line-height:20px;white-space:nowrap;font-size:11.5px;color:#222">03.05.2025 18:00</div>
<div style="position:absolute;left:711px;top:78.9px;width:91px;height:20px;line-height:20px;white-space:nowrap;font-size:11.5px;color:#222;text-align:right">100</div>
<svg style="position:absolute;left:844.50px;top:81.00px" width="13.00" height="16.00" viewBox="0 0 13 16"><path d="M3.3 7 V4.8 A3.2 3.2 0 0 1 9.7 4.8 V7" fill="none" stroke="#1010e6" stroke-width="2.1"/><rect x="0.5" y="6.8" width="12" height="8.7" rx="1.6" fill="#1010e6"/></svg>
<svg style="position:absolute;left:935px;top:81.5px" width="12" height="13" viewBox="0 0 12 13" stroke="#1a8a1a" stroke-width="1.9" stroke-linecap="butt"><path d="M6 0.5 V12.5 M0.8 3.5 L11.2 9.5 M0.8 9.5 L11.2 3.5"/></svg>
<div style="position:absolute;left:0px;top:99px;width:19px;height:20px;line-height:20px;white-space:nowrap;font-size:9.8px;color:#222;text-align:center">6</div>
<div style="position:absolute;left:19px;top:99px;width:9px;height:20px;background:#163862"></div>
<div style="position:absolute;left:28px;top:99px;width:9px;height:20px;background:#1c4a82"></div>
<div style="position:absolute;left:37px;top:99px;width:9px;height:20px;background:#225c9e"></div>
<div style="position:absolute;left:19px;top:99px;width:27px;height:1px;background-image:linear-gradient(90deg,rgba(255,255,255,0.13) 3px,transparent 3px);background-size:5px 1px"></div>
<div style="position:absolute;left:46px;top:99px;width:760px;height:20px;background:#fff"></div>
<div style="position:absolute;left:806px;top:99px;width:180px;height:20px;background:#efefef"></div>
<div style="position:absolute;left:46px;top:118px;width:940px;height:1px;background-image:linear-gradient(90deg,#bdbdc1 3px,transparent 3px);background-size:5px 1px"></div>
<div style="position:absolute;left:181px;top:99px;width:1px;height:20px;background-image:linear-gradient(180deg,#c6c6ca 3px,transparent 3px);background-size:1px 5px"></div>
<div style="position:absolute;left:498px;top:99px;width:1px;height:20px;background-image:linear-gradient(180deg,#c6c6ca 3px,transparent 3px);background-size:1px 5px"></div>
<div style="position:absolute;left:604px;top:99px;width:1px;height:20px;background-image:linear-gradient(180deg,#c6c6ca 3px,transparent 3px);background-size:1px 5px"></div>
<div style="position:absolute;left:711px;top:99px;width:1px;height:20px;background-image:linear-gradient(180deg,#c6c6ca 3px,transparent 3px);background-size:1px 5px"></div>
<div style="position:absolute;left:806px;top:99px;width:1px;height:20px;background-image:linear-gradient(180deg,#c6c6ca 3px,transparent 3px);background-size:1px 5px"></div>
<div style="position:absolute;left:896px;top:99px;width:1px;height:20px;background-image:linear-gradient(180deg,#c6c6ca 3px,transparent 3px);background-size:1px 5px"></div>
<div style="position:absolute;left:986px;top:99px;width:1px;height:20px;background-image:linear-gradient(180deg,#c6c6ca 3px,transparent 3px);background-size:1px 5px"></div>
<div style="position:absolute;left:48px;top:104px;width:11px;height:11px;border:1.3px solid #2a2a2a;border-radius:1px;border-bottom-color:transparent"></div>
<div style="position:absolute;left:68px;top:98.4px;height:20px;line-height:20px;white-space:nowrap;font-size:10.9px;color:#222">01.03</div>
<div style="position:absolute;left:185px;top:98.4px;height:20px;line-height:20px;white-space:nowrap;font-size:11.6px;color:#222">Устройство песчаного основания</div>
<div style="position:absolute;left:507px;top:98.4px;height:20px;line-height:20px;white-space:nowrap;font-size:11.5px;color:#222">04.05.2025 09:00</div>
<div style="position:absolute;left:614px;top:98.4px;height:20px;line-height:20px;white-space:nowrap;font-size:11.5px;color:#222">05.05.2025 18:00</div>
<div style="position:absolute;left:711px;top:98.4px;width:91px;height:20px;line-height:20px;white-space:nowrap;font-size:11.5px;color:#222;text-align:right">65</div>
<svg style="position:absolute;left:844.50px;top:101.00px" width="13.00" height="16.00" viewBox="0 0 13 16"><path d="M3.3 7 V4.8 A3.2 3.2 0 0 1 9.7 4.8 V7" fill="none" stroke="#128212" stroke-width="2.1"/><rect x="0.5" y="6.8" width="12" height="8.7" rx="1.6" fill="#128212"/></svg>
<svg style="position:absolute;left:935px;top:101.5px" width="12" height="13" viewBox="0 0 12 13" stroke="#f0141e" stroke-width="1.9" stroke-linecap="butt"><path d="M6 0.5 V12.5 M0.8 3.5 L11.2 9.5 M0.8 9.5 L11.2 3.5"/></svg>
<div style="position:absolute;left:0px;top:119px;width:19px;height:20px;line-height:20px;white-space:nowrap;font-size:9.8px;color:#222;text-align:center">7</div>
<div style="position:absolute;left:19px;top:119px;width:9px;height:20px;background:#163862"></div>
<div style="position:absolute;left:28px;top:119px;width:9px;height:20px;background:#1c4a82"></div>
<div style="position:absolute;left:19px;top:119px;width:18px;height:1px;background-image:linear-gradient(90deg,rgba(255,255,255,0.13) 3px,transparent 3px);background-size:5px 1px"></div>
<div style="position:absolute;left:37px;top:119px;width:949px;height:20px;background:#225c9e"></div>
<div style="position:absolute;left:37px;top:119px;width:949px;height:1px;background:rgba(255,255,255,0.08)"></div>
<div style="position:absolute;left:498px;top:119px;width:1px;height:20px;background:rgba(255,255,255,0.10)"></div>
<div style="position:absolute;left:604px;top:119px;width:1px;height:20px;background:rgba(255,255,255,0.10)"></div>
<div style="position:absolute;left:711px;top:119px;width:1px;height:20px;background:rgba(255,255,255,0.10)"></div>
<div style="position:absolute;left:806px;top:119px;width:1px;height:20px;background:rgba(255,255,255,0.10)"></div>
<div style="position:absolute;left:896px;top:119px;width:1px;height:20px;background:rgba(255,255,255,0.10)"></div>
<div style="position:absolute;left:37px;top:128px;width:9px;height:2px;background:#fff"></div>
<div style="position:absolute;left:48px;top:124px;width:11px;height:11px;border:1.1px solid #fff"></div>
<div style="position:absolute;left:68px;top:119.4px;height:20px;line-height:20px;white-space:nowrap;font-size:10.4px;font-weight:bold;color:#fff">OP_syn.1.1.2</div>
<div style="position:absolute;left:185px;top:118.9px;height:20px;line-height:20px;white-space:nowrap;font-size:10.75px;font-weight:bold;color:#fff">Общестроительные работы</div>
<div style="position:absolute;left:507px;top:118.9px;height:20px;line-height:20px;white-space:nowrap;font-size:11.4px;font-weight:bold;color:#fff;letter-spacing:-0.05px">06.05.2025 09:00</div>
<div style="position:absolute;left:614px;top:118.9px;height:20px;line-height:20px;white-space:nowrap;font-size:11.4px;font-weight:bold;color:#fff;letter-spacing:-0.05px">06.08.2025 18:00</div>
<div style="position:absolute;left:711px;top:118.9px;width:91px;height:20px;line-height:20px;white-space:nowrap;font-size:11px;font-weight:bold;color:#fff;text-align:right">0</div>
<div style="position:absolute;left:0px;top:139px;width:19px;height:20px;line-height:20px;white-space:nowrap;font-size:9.8px;color:#222;text-align:center">8</div>
<div style="position:absolute;left:19px;top:139px;width:9px;height:20px;background:#163862"></div>
<div style="position:absolute;left:28px;top:139px;width:9px;height:20px;background:#1c4a82"></div>
<div style="position:absolute;left:37px;top:139px;width:9px;height:20px;background:#225c9e"></div>
<div style="position:absolute;left:19px;top:139px;width:27px;height:1px;background-image:linear-gradient(90deg,rgba(255,255,255,0.13) 3px,transparent 3px);background-size:5px 1px"></div>
<div style="position:absolute;left:46px;top:139px;width:940px;height:20px;background:#2a6cbd"></div>
<div style="position:absolute;left:46px;top:139px;width:940px;height:1px;background:rgba(255,255,255,0.08)"></div>
<div style="position:absolute;left:498px;top:139px;width:1px;height:20px;background:rgba(255,255,255,0.10)"></div>
<div style="position:absolute;left:604px;top:139px;width:1px;height:20px;background:rgba(255,255,255,0.10)"></div>
<div style="position:absolute;left:711px;top:139px;width:1px;height:20px;background:rgba(255,255,255,0.10)"></div>
<div style="position:absolute;left:806px;top:139px;width:1px;height:20px;background:rgba(255,255,255,0.10)"></div>
<div style="position:absolute;left:896px;top:139px;width:1px;height:20px;background:rgba(255,255,255,0.10)"></div>
<div style="position:absolute;left:46px;top:148px;width:9px;height:2px;background:#fff"></div>
<div style="position:absolute;left:57px;top:144px;width:11px;height:11px;border:1.1px solid #fff"></div>
<div style="position:absolute;left:77px;top:139.4px;height:20px;line-height:20px;white-space:nowrap;font-size:10.4px;font-weight:bold;color:#fff">OP_syn.1.1.2.1.2.01</div>
<div style="position:absolute;left:185px;top:138.9px;height:20px;line-height:20px;white-space:nowrap;font-size:10.75px;font-weight:bold;color:#fff">Фундамент</div>
<div style="position:absolute;left:507px;top:138.9px;height:20px;line-height:20px;white-space:nowrap;font-size:11.4px;font-weight:bold;color:#fff;letter-spacing:-0.05px">06.05.2025 09:00</div>
<div style="position:absolute;left:614px;top:138.9px;height:20px;line-height:20px;white-space:nowrap;font-size:11.4px;font-weight:bold;color:#fff;letter-spacing:-0.05px">18.05.2025 18:00</div>
<div style="position:absolute;left:711px;top:138.9px;width:91px;height:20px;line-height:20px;white-space:nowrap;font-size:11px;font-weight:bold;color:#fff;text-align:right">0</div>
<div style="position:absolute;left:0px;top:159px;width:19px;height:19px;line-height:19px;white-space:nowrap;font-size:9.8px;color:#222;text-align:center">9</div>
<div style="position:absolute;left:19px;top:159px;width:9px;height:19px;background:#163862"></div>
<div style="position:absolute;left:28px;top:159px;width:9px;height:19px;background:#1c4a82"></div>
<div style="position:absolute;left:37px;top:159px;width:9px;height:19px;background:#225c9e"></div>
<div style="position:absolute;left:46px;top:159px;width:9px;height:19px;background:#2a6cbd"></div>
<div style="position:absolute;left:19px;top:159px;width:36px;height:1px;background-image:linear-gradient(90deg,rgba(255,255,255,0.13) 3px,transparent 3px);background-size:5px 1px"></div>
<div style="position:absolute;left:55px;top:159px;width:751px;height:19px;background:#fdfbd3"></div>
<div style="position:absolute;left:806px;top:159px;width:180px;height:19px;background:#fdfbd3"></div>
<div style="position:absolute;left:55px;top:177px;width:931px;height:1px;background-image:linear-gradient(90deg,#bdbdc1 3px,transparent 3px);background-size:5px 1px"></div>
<div style="position:absolute;left:181px;top:159px;width:1px;height:19px;background-image:linear-gradient(180deg,#c6c6ca 3px,transparent 3px);background-size:1px 5px"></div>
<div style="position:absolute;left:498px;top:159px;width:1px;height:19px;background-image:linear-gradient(180deg,#c6c6ca 3px,transparent 3px);background-size:1px 5px"></div>
<div style="position:absolute;left:604px;top:159px;width:1px;height:19px;background-image:linear-gradient(180deg,#c6c6ca 3px,transparent 3px);background-size:1px 5px"></div>
<div style="position:absolute;left:711px;top:159px;width:1px;height:19px;background-image:linear-gradient(180deg,#c6c6ca 3px,transparent 3px);background-size:1px 5px"></div>
<div style="position:absolute;left:806px;top:159px;width:1px;height:19px;background-image:linear-gradient(180deg,#c6c6ca 3px,transparent 3px);background-size:1px 5px"></div>
<div style="position:absolute;left:896px;top:159px;width:1px;height:19px;background-image:linear-gradient(180deg,#c6c6ca 3px,transparent 3px);background-size:1px 5px"></div>
<div style="position:absolute;left:986px;top:159px;width:1px;height:19px;background-image:linear-gradient(180deg,#c6c6ca 3px,transparent 3px);background-size:1px 5px"></div>
<div style="position:absolute;left:57px;top:164px;width:11px;height:11px;border:1.3px solid #2a2a2a;border-radius:1px"></div>
<div style="position:absolute;left:77px;top:157.9px;height:19px;line-height:19px;white-space:nowrap;font-size:10.9px;color:#222">02.01.01</div>
<div style="position:absolute;left:185px;top:157.9px;height:19px;line-height:19px;white-space:nowrap;font-size:11.6px;color:#222">Устройство буронабивных свай захватка 1</div>
<div style="position:absolute;left:507px;top:157.9px;height:19px;line-height:19px;white-space:nowrap;font-size:11.5px;color:#222">06.05.2025 09:00</div>
<div style="position:absolute;left:614px;top:157.9px;height:19px;line-height:19px;white-space:nowrap;font-size:11.5px;color:#222">07.05.2025 18:00</div>
<div style="position:absolute;left:711px;top:157.9px;width:91px;height:19px;line-height:19px;white-space:nowrap;font-size:11.5px;color:#222;text-align:right">54</div>
<svg style="position:absolute;left:844.50px;top:160.50px" width="13.00" height="16.00" viewBox="0 0 13 16"><path d="M3.3 7 V4.8 A3.2 3.2 0 0 1 9.7 4.8 V7" fill="none" stroke="#128212" stroke-width="2.1"/><rect x="0.5" y="6.8" width="12" height="8.7" rx="1.6" fill="#128212"/></svg>
<svg style="position:absolute;left:935px;top:161.0px" width="12" height="13" viewBox="0 0 12 13" stroke="#f0141e" stroke-width="1.9" stroke-linecap="butt"><path d="M6 0.5 V12.5 M0.8 3.5 L11.2 9.5 M0.8 9.5 L11.2 3.5"/></svg>
<div style="position:absolute;left:0px;top:178px;width:19px;height:20px;line-height:20px;white-space:nowrap;font-size:9.8px;color:#222;text-align:center">10</div>
<div style="position:absolute;left:19px;top:178px;width:9px;height:20px;background:#163862"></div>
<div style="position:absolute;left:28px;top:178px;width:9px;height:20px;background:#1c4a82"></div>
<div style="position:absolute;left:37px;top:178px;width:9px;height:20px;background:#225c9e"></div>
<div style="position:absolute;left:46px;top:178px;width:9px;height:20px;background:#2a6cbd"></div>
<div style="position:absolute;left:19px;top:178px;width:36px;height:1px;background-image:linear-gradient(90deg,rgba(255,255,255,0.13) 3px,transparent 3px);background-size:5px 1px"></div>
<div style="position:absolute;left:55px;top:178px;width:751px;height:20px;background:#fff"></div>
<div style="position:absolute;left:806px;top:178px;width:180px;height:20px;background:#efefef"></div>
<div style="position:absolute;left:55px;top:197px;width:931px;height:1px;background-image:linear-gradient(90deg,#bdbdc1 3px,transparent 3px);background-size:5px 1px"></div>
<div style="position:absolute;left:181px;top:178px;width:1px;height:20px;background-image:linear-gradient(180deg,#c6c6ca 3px,transparent 3px);background-size:1px 5px"></div>
<div style="position:absolute;left:498px;top:178px;width:1px;height:20px;background-image:linear-gradient(180deg,#c6c6ca 3px,transparent 3px);background-size:1px 5px"></div>
<div style="position:absolute;left:604px;top:178px;width:1px;height:20px;background-image:linear-gradient(180deg,#c6c6ca 3px,transparent 3px);background-size:1px 5px"></div>
<div style="position:absolute;left:711px;top:178px;width:1px;height:20px;background-image:linear-gradient(180deg,#c6c6ca 3px,transparent 3px);background-size:1px 5px"></div>
<div style="position:absolute;left:806px;top:178px;width:1px;height:20px;background-image:linear-gradient(180deg,#c6c6ca 3px,transparent 3px);background-size:1px 5px"></div>
<div style="position:absolute;left:896px;top:178px;width:1px;height:20px;background-image:linear-gradient(180deg,#c6c6ca 3px,transparent 3px);background-size:1px 5px"></div>
<div style="position:absolute;left:986px;top:178px;width:1px;height:20px;background-image:linear-gradient(180deg,#c6c6ca 3px,transparent 3px);background-size:1px 5px"></div>
<div style="position:absolute;left:57px;top:183px;width:11px;height:11px;border:1.3px solid #2a2a2a;border-radius:1px"></div>
<div style="position:absolute;left:77px;top:177.9px;height:20px;line-height:20px;white-space:nowrap;font-size:10.9px;color:#222">02.01.02</div>
<div style="position:absolute;left:185px;top:177.9px;height:20px;line-height:20px;white-space:nowrap;font-size:11.6px;color:#222">Устройство буронабивных свай захватка 2</div>
<div style="position:absolute;left:507px;top:177.9px;height:20px;line-height:20px;white-space:nowrap;font-size:11.5px;color:#222">08.05.2025 09:00</div>
<div style="position:absolute;left:614px;top:177.9px;height:20px;line-height:20px;white-space:nowrap;font-size:11.5px;color:#222">09.05.2025 18:00</div>
<div style="position:absolute;left:711px;top:177.9px;width:91px;height:20px;line-height:20px;white-space:nowrap;font-size:11.5px;color:#222;text-align:right">23</div>
<svg style="position:absolute;left:844.50px;top:180.00px" width="13.00" height="16.00" viewBox="0 0 13 16"><path d="M3.3 7 V4.8 A3.2 3.2 0 0 1 9.7 4.8 V7" fill="none" stroke="#128212" stroke-width="2.1"/><rect x="0.5" y="6.8" width="12" height="8.7" rx="1.6" fill="#128212"/></svg>
<svg style="position:absolute;left:935px;top:180.5px" width="12" height="13" viewBox="0 0 12 13" stroke="#f0141e" stroke-width="1.9" stroke-linecap="butt"><path d="M6 0.5 V12.5 M0.8 3.5 L11.2 9.5 M0.8 9.5 L11.2 3.5"/></svg>
<div style="position:absolute;left:0px;top:198px;width:19px;height:20px;line-height:20px;white-space:nowrap;font-size:9.8px;color:#222;text-align:center">11</div>
<div style="position:absolute;left:19px;top:198px;width:9px;height:20px;background:#163862"></div>
<div style="position:absolute;left:28px;top:198px;width:9px;height:20px;background:#1c4a82"></div>
<div style="position:absolute;left:37px;top:198px;width:9px;height:20px;background:#225c9e"></div>
<div style="position:absolute;left:46px;top:198px;width:9px;height:20px;background:#2a6cbd"></div>
<div style="position:absolute;left:19px;top:198px;width:36px;height:1px;background-image:linear-gradient(90deg,rgba(255,255,255,0.13) 3px,transparent 3px);background-size:5px 1px"></div>
<div style="position:absolute;left:55px;top:198px;width:751px;height:20px;background:#fff"></div>
<div style="position:absolute;left:806px;top:198px;width:180px;height:20px;background:#efefef"></div>
<div style="position:absolute;left:55px;top:217px;width:931px;height:1px;background-image:linear-gradient(90deg,#bdbdc1 3px,transparent 3px);background-size:5px 1px"></div>
<div style="position:absolute;left:181px;top:198px;width:1px;height:20px;background-image:linear-gradient(180deg,#c6c6ca 3px,transparent 3px);background-size:1px 5px"></div>
<div style="position:absolute;left:498px;top:198px;width:1px;height:20px;background-image:linear-gradient(180deg,#c6c6ca 3px,transparent 3px);background-size:1px 5px"></div>
<div style="position:absolute;left:604px;top:198px;width:1px;height:20px;background-image:linear-gradient(180deg,#c6c6ca 3px,transparent 3px);background-size:1px 5px"></div>
<div style="position:absolute;left:711px;top:198px;width:1px;height:20px;background-image:linear-gradient(180deg,#c6c6ca 3px,transparent 3px);background-size:1px 5px"></div>
<div style="position:absolute;left:806px;top:198px;width:1px;height:20px;background-image:linear-gradient(180deg,#c6c6ca 3px,transparent 3px);background-size:1px 5px"></div>
<div style="position:absolute;left:896px;top:198px;width:1px;height:20px;background-image:linear-gradient(180deg,#c6c6ca 3px,transparent 3px);background-size:1px 5px"></div>
<div style="position:absolute;left:986px;top:198px;width:1px;height:20px;background-image:linear-gradient(180deg,#c6c6ca 3px,transparent 3px);background-size:1px 5px"></div>
<div style="position:absolute;left:57px;top:203px;width:11px;height:11px;border:1.3px solid #2a2a2a;border-radius:1px;border-bottom-color:transparent"></div>
<div style="position:absolute;left:77px;top:197.9px;height:20px;line-height:20px;white-space:nowrap;font-size:10.9px;color:#222">02.01.03</div>
<div style="position:absolute;left:185px;top:197.9px;height:20px;line-height:20px;white-space:nowrap;font-size:11.6px;color:#222">Устройство буронабивных свай захватка 3</div>
<div style="position:absolute;left:507px;top:197.9px;height:20px;line-height:20px;white-space:nowrap;font-size:11.5px;color:#222">10.05.2025 09:00</div>
<div style="position:absolute;left:614px;top:197.9px;height:20px;line-height:20px;white-space:nowrap;font-size:11.5px;color:#222">11.05.2025 18:00</div>
<div style="position:absolute;left:711px;top:197.9px;width:91px;height:20px;line-height:20px;white-space:nowrap;font-size:11.5px;color:#222;text-align:right">87</div>
<svg style="position:absolute;left:844.50px;top:200.00px" width="13.00" height="16.00" viewBox="0 0 13 16"><path d="M3.3 7 V4.8 A3.2 3.2 0 0 1 9.7 4.8 V7" fill="none" stroke="#128212" stroke-width="2.1"/><rect x="0.5" y="6.8" width="12" height="8.7" rx="1.6" fill="#128212"/></svg>
<svg style="position:absolute;left:935px;top:200.5px" width="12" height="13" viewBox="0 0 12 13" stroke="#f0141e" stroke-width="1.9" stroke-linecap="butt"><path d="M6 0.5 V12.5 M0.8 3.5 L11.2 9.5 M0.8 9.5 L11.2 3.5"/></svg>
<div style="position:absolute;left:0px;top:218px;width:19px;height:20px;line-height:20px;white-space:nowrap;font-size:9.8px;color:#222;text-align:center">12</div>
<div style="position:absolute;left:19px;top:218px;width:9px;height:20px;background:#163862"></div>
<div style="position:absolute;left:28px;top:218px;width:9px;height:20px;background:#1c4a82"></div>
<div style="position:absolute;left:37px;top:218px;width:9px;height:20px;background:#225c9e"></div>
<div style="position:absolute;left:46px;top:218px;width:9px;height:20px;background:#2a6cbd"></div>
<div style="position:absolute;left:19px;top:218px;width:36px;height:1px;background-image:linear-gradient(90deg,rgba(255,255,255,0.13) 3px,transparent 3px);background-size:5px 1px"></div>
<div style="position:absolute;left:55px;top:218px;width:751px;height:20px;background:#fff"></div>
<div style="position:absolute;left:806px;top:218px;width:180px;height:20px;background:#efefef"></div>
<div style="position:absolute;left:55px;top:237px;width:931px;height:1px;background-image:linear-gradient(90deg,#bdbdc1 3px,transparent 3px);background-size:5px 1px"></div>
<div style="position:absolute;left:181px;top:218px;width:1px;height:20px;background-image:linear-gradient(180deg,#c6c6ca 3px,transparent 3px);background-size:1px 5px"></div>
<div style="position:absolute;left:498px;top:218px;width:1px;height:20px;background-image:linear-gradient(180deg,#c6c6ca 3px,transparent 3px);background-size:1px 5px"></div>
<div style="position:absolute;left:604px;top:218px;width:1px;height:20px;background-image:linear-gradient(180deg,#c6c6ca 3px,transparent 3px);background-size:1px 5px"></div>
<div style="position:absolute;left:711px;top:218px;width:1px;height:20px;background-image:linear-gradient(180deg,#c6c6ca 3px,transparent 3px);background-size:1px 5px"></div>
<div style="position:absolute;left:806px;top:218px;width:1px;height:20px;background-image:linear-gradient(180deg,#c6c6ca 3px,transparent 3px);background-size:1px 5px"></div>
<div style="position:absolute;left:896px;top:218px;width:1px;height:20px;background-image:linear-gradient(180deg,#c6c6ca 3px,transparent 3px);background-size:1px 5px"></div>
<div style="position:absolute;left:986px;top:218px;width:1px;height:20px;background-image:linear-gradient(180deg,#c6c6ca 3px,transparent 3px);background-size:1px 5px"></div>
<div style="position:absolute;left:57px;top:223px;width:11px;height:11px;border:1.3px solid #2a2a2a;border-radius:1px"></div>
<div style="position:absolute;left:77px;top:217.4px;height:20px;line-height:20px;white-space:nowrap;font-size:10.9px;color:#222">02.01.04</div>
<div style="position:absolute;left:185px;top:217.4px;height:20px;line-height:20px;white-space:nowrap;font-size:11.6px;color:#222">Устройство буронабивных свай захватка 4</div>
<div style="position:absolute;left:507px;top:217.4px;height:20px;line-height:20px;white-space:nowrap;font-size:11.5px;color:#222">12.05.2025 09:00</div>
<div style="position:absolute;left:614px;top:217.4px;height:20px;line-height:20px;white-space:nowrap;font-size:11.5px;color:#222">13.05.2025 18:00</div>
<div style="position:absolute;left:711px;top:217.4px;width:91px;height:20px;line-height:20px;white-space:nowrap;font-size:11.5px;color:#222;text-align:right">61</div>
<svg style="position:absolute;left:844.50px;top:220.00px" width="13.00" height="16.00" viewBox="0 0 13 16"><path d="M3.3 7 V4.8 A3.2 3.2 0 0 1 9.7 4.8 V7" fill="none" stroke="#128212" stroke-width="2.1"/><rect x="0.5" y="6.8" width="12" height="8.7" rx="1.6" fill="#128212"/></svg>
<svg style="position:absolute;left:935px;top:220.5px" width="12" height="13" viewBox="0 0 12 13" stroke="#f0141e" stroke-width="1.9" stroke-linecap="butt"><path d="M6 0.5 V12.5 M0.8 3.5 L11.2 9.5 M0.8 9.5 L11.2 3.5"/></svg>
<div style="position:absolute;left:0px;top:238px;width:19px;height:20px;line-height:20px;white-space:nowrap;font-size:9.8px;color:#222;text-align:center">13</div>
<div style="position:absolute;left:19px;top:238px;width:9px;height:20px;background:#163862"></div>
<div style="position:absolute;left:28px;top:238px;width:9px;height:20px;background:#1c4a82"></div>
<div style="position:absolute;left:37px;top:238px;width:9px;height:20px;background:#225c9e"></div>
<div style="position:absolute;left:46px;top:238px;width:9px;height:20px;background:#2a6cbd"></div>
<div style="position:absolute;left:19px;top:238px;width:36px;height:1px;background-image:linear-gradient(90deg,rgba(255,255,255,0.13) 3px,transparent 3px);background-size:5px 1px"></div>
<div style="position:absolute;left:55px;top:238px;width:751px;height:20px;background:#fff"></div>
<div style="position:absolute;left:806px;top:238px;width:180px;height:20px;background:#efefef"></div>
<div style="position:absolute;left:55px;top:257px;width:931px;height:1px;background-image:linear-gradient(90deg,#bdbdc1 3px,transparent 3px);background-size:5px 1px"></div>
<div style="position:absolute;left:181px;top:238px;width:1px;height:20px;background-image:linear-gradient(180deg,#c6c6ca 3px,transparent 3px);background-size:1px 5px"></div>
<div style="position:absolute;left:498px;top:238px;width:1px;height:20px;background-image:linear-gradient(180deg,#c6c6ca 3px,transparent 3px);background-size:1px 5px"></div>
<div style="position:absolute;left:604px;top:238px;width:1px;height:20px;background-image:linear-gradient(180deg,#c6c6ca 3px,transparent 3px);background-size:1px 5px"></div>
<div style="position:absolute;left:711px;top:238px;width:1px;height:20px;background-image:linear-gradient(180deg,#c6c6ca 3px,transparent 3px);background-size:1px 5px"></div>
<div style="position:absolute;left:806px;top:238px;width:1px;height:20px;background-image:linear-gradient(180deg,#c6c6ca 3px,transparent 3px);background-size:1px 5px"></div>
<div style="position:absolute;left:896px;top:238px;width:1px;height:20px;background-image:linear-gradient(180deg,#c6c6ca 3px,transparent 3px);background-size:1px 5px"></div>
<div style="position:absolute;left:986px;top:238px;width:1px;height:20px;background-image:linear-gradient(180deg,#c6c6ca 3px,transparent 3px);background-size:1px 5px"></div>
<div style="position:absolute;left:57px;top:243px;width:11px;height:11px;border:1.3px solid #2a2a2a;border-radius:1px"></div>
<div style="position:absolute;left:77px;top:237.4px;height:20px;line-height:20px;white-space:nowrap;font-size:10.9px;color:#222">02.01.05</div>
<div style="position:absolute;left:185px;top:237.4px;height:20px;line-height:20px;white-space:nowrap;font-size:11.6px;color:#222">Устройство фундаментной плиты</div>
<div style="position:absolute;left:507px;top:237.4px;height:20px;line-height:20px;white-space:nowrap;font-size:11.5px;color:#222">14.05.2025 09:00</div>
<div style="position:absolute;left:614px;top:237.4px;height:20px;line-height:20px;white-space:nowrap;font-size:11.5px;color:#222">18.05.2025 18:00</div>
<div style="position:absolute;left:711px;top:237.4px;width:91px;height:20px;line-height:20px;white-space:nowrap;font-size:11.5px;color:#222;text-align:right">12</div>
<svg style="position:absolute;left:844.50px;top:240.00px" width="13.00" height="16.00" viewBox="0 0 13 16"><path d="M3.3 7 V4.8 A3.2 3.2 0 0 1 9.7 4.8 V7" fill="none" stroke="#128212" stroke-width="2.1"/><rect x="0.5" y="6.8" width="12" height="8.7" rx="1.6" fill="#128212"/></svg>
<svg style="position:absolute;left:935px;top:240.5px" width="12" height="13" viewBox="0 0 12 13" stroke="#f0141e" stroke-width="1.9" stroke-linecap="butt"><path d="M6 0.5 V12.5 M0.8 3.5 L11.2 9.5 M0.8 9.5 L11.2 3.5"/></svg>
<div style="position:absolute;left:0px;top:258px;width:19px;height:20px;line-height:20px;white-space:nowrap;font-size:9.8px;color:#222;text-align:center">14</div>
<div style="position:absolute;left:19px;top:258px;width:9px;height:20px;background:#163862"></div>
<div style="position:absolute;left:28px;top:258px;width:9px;height:20px;background:#1c4a82"></div>
<div style="position:absolute;left:37px;top:258px;width:9px;height:20px;background:#225c9e"></div>
<div style="position:absolute;left:19px;top:258px;width:27px;height:1px;background-image:linear-gradient(90deg,rgba(255,255,255,0.13) 3px,transparent 3px);background-size:5px 1px"></div>
<div style="position:absolute;left:46px;top:258px;width:940px;height:20px;background:#2a6cbd"></div>
<div style="position:absolute;left:46px;top:258px;width:940px;height:1px;background:rgba(255,255,255,0.08)"></div>
<div style="position:absolute;left:498px;top:258px;width:1px;height:20px;background:rgba(255,255,255,0.10)"></div>
<div style="position:absolute;left:604px;top:258px;width:1px;height:20px;background:rgba(255,255,255,0.10)"></div>
<div style="position:absolute;left:711px;top:258px;width:1px;height:20px;background:rgba(255,255,255,0.10)"></div>
<div style="position:absolute;left:806px;top:258px;width:1px;height:20px;background:rgba(255,255,255,0.10)"></div>
<div style="position:absolute;left:896px;top:258px;width:1px;height:20px;background:rgba(255,255,255,0.10)"></div>
<div style="position:absolute;left:46px;top:267px;width:9px;height:2px;background:#fff"></div>
<div style="position:absolute;left:57px;top:263px;width:11px;height:11px;border:1.1px solid #fff"></div>
<div style="position:absolute;left:77px;top:258.4px;height:20px;line-height:20px;white-space:nowrap;font-size:10.4px;font-weight:bold;color:#fff">OP_syn.1.1.2.1.2.02</div>
<div style="position:absolute;left:185px;top:257.9px;height:20px;line-height:20px;white-space:nowrap;font-size:10.75px;font-weight:bold;color:#fff">Монолитные работы подземной части</div>
<div style="position:absolute;left:507px;top:257.9px;height:20px;line-height:20px;white-space:nowrap;font-size:11.4px;font-weight:bold;color:#fff;letter-spacing:-0.05px">19.05.2025 09:00</div>
<div style="position:absolute;left:614px;top:257.9px;height:20px;line-height:20px;white-space:nowrap;font-size:11.4px;font-weight:bold;color:#fff;letter-spacing:-0.05px">29.05.2025 18:00</div>
<div style="position:absolute;left:711px;top:257.9px;width:91px;height:20px;line-height:20px;white-space:nowrap;font-size:11px;font-weight:bold;color:#fff;text-align:right">0</div>
<div style="position:absolute;left:0px;top:278px;width:19px;height:19px;line-height:19px;white-space:nowrap;font-size:9.8px;color:#222;text-align:center">15</div>
<div style="position:absolute;left:19px;top:278px;width:9px;height:19px;background:#163862"></div>
<div style="position:absolute;left:28px;top:278px;width:9px;height:19px;background:#1c4a82"></div>
<div style="position:absolute;left:37px;top:278px;width:9px;height:19px;background:#225c9e"></div>
<div style="position:absolute;left:46px;top:278px;width:9px;height:19px;background:#2a6cbd"></div>
<div style="position:absolute;left:19px;top:278px;width:36px;height:1px;background-image:linear-gradient(90deg,rgba(255,255,255,0.13) 3px,transparent 3px);background-size:5px 1px"></div>
<div style="position:absolute;left:55px;top:278px;width:751px;height:19px;background:#fff"></div>
<div style="position:absolute;left:806px;top:278px;width:180px;height:19px;background:#efefef"></div>
<div style="position:absolute;left:55px;top:296px;width:931px;height:1px;background-image:linear-gradient(90deg,#bdbdc1 3px,transparent 3px);background-size:5px 1px"></div>
<div style="position:absolute;left:181px;top:278px;width:1px;height:19px;background-image:linear-gradient(180deg,#c6c6ca 3px,transparent 3px);background-size:1px 5px"></div>
<div style="position:absolute;left:498px;top:278px;width:1px;height:19px;background-image:linear-gradient(180deg,#c6c6ca 3px,transparent 3px);background-size:1px 5px"></div>
<div style="position:absolute;left:604px;top:278px;width:1px;height:19px;background-image:linear-gradient(180deg,#c6c6ca 3px,transparent 3px);background-size:1px 5px"></div>
<div style="position:absolute;left:711px;top:278px;width:1px;height:19px;background-image:linear-gradient(180deg,#c6c6ca 3px,transparent 3px);background-size:1px 5px"></div>
<div style="position:absolute;left:806px;top:278px;width:1px;height:19px;background-image:linear-gradient(180deg,#c6c6ca 3px,transparent 3px);background-size:1px 5px"></div>
<div style="position:absolute;left:896px;top:278px;width:1px;height:19px;background-image:linear-gradient(180deg,#c6c6ca 3px,transparent 3px);background-size:1px 5px"></div>
<div style="position:absolute;left:986px;top:278px;width:1px;height:19px;background-image:linear-gradient(180deg,#c6c6ca 3px,transparent 3px);background-size:1px 5px"></div>
<div style="position:absolute;left:57px;top:283px;width:11px;height:11px;border:1.3px solid #2a2a2a;border-radius:1px"></div>
<div style="position:absolute;left:77px;top:276.9px;height:19px;line-height:19px;white-space:nowrap;font-size:10.9px;color:#222">02.02.01</div>
<div style="position:absolute;left:185px;top:276.9px;height:19px;line-height:19px;white-space:nowrap;font-size:11.6px;color:#222">Устройство монолитных стен цокольного этажа</div>
<div style="position:absolute;left:507px;top:276.9px;height:19px;line-height:19px;white-space:nowrap;font-size:11.5px;color:#222">19.05.2025 09:00</div>
<div style="position:absolute;left:614px;top:276.9px;height:19px;line-height:19px;white-space:nowrap;font-size:11.5px;color:#222">20.05.2025 18:00</div>
<div style="position:absolute;left:711px;top:276.9px;width:91px;height:19px;line-height:19px;white-space:nowrap;font-size:11.5px;color:#222;text-align:right">44</div>
<svg style="position:absolute;left:844.50px;top:279.50px" width="13.00" height="16.00" viewBox="0 0 13 16"><path d="M3.3 7 V4.8 A3.2 3.2 0 0 1 9.7 4.8 V7" fill="none" stroke="#128212" stroke-width="2.1"/><rect x="0.5" y="6.8" width="12" height="8.7" rx="1.6" fill="#128212"/></svg>
<svg style="position:absolute;left:935px;top:280.0px" width="12" height="13" viewBox="0 0 12 13" stroke="#f0141e" stroke-width="1.9" stroke-linecap="butt"><path d="M6 0.5 V12.5 M0.8 3.5 L11.2 9.5 M0.8 9.5 L11.2 3.5"/></svg>
<div style="position:absolute;left:0px;top:297px;width:19px;height:20px;line-height:20px;white-space:nowrap;font-size:9.8px;color:#222;text-align:center">16</div>
<div style="position:absolute;left:19px;top:297px;width:9px;height:20px;background:#163862"></div>
<div style="position:absolute;left:28px;top:297px;width:9px;height:20px;background:#1c4a82"></div>
<div style="position:absolute;left:37px;top:297px;width:9px;height:20px;background:#225c9e"></div>
<div style="position:absolute;left:46px;top:297px;width:9px;height:20px;background:#2a6cbd"></div>
<div style="position:absolute;left:19px;top:297px;width:36px;height:1px;background-image:linear-gradient(90deg,rgba(255,255,255,0.13) 3px,transparent 3px);background-size:5px 1px"></div>
<div style="position:absolute;left:55px;top:297px;width:751px;height:20px;background:#fff"></div>
<div style="position:absolute;left:806px;top:297px;width:180px;height:20px;background:#efefef"></div>
<div style="position:absolute;left:55px;top:316px;width:931px;height:1px;background-image:linear-gradient(90deg,#bdbdc1 3px,transparent 3px);background-size:5px 1px"></div>
<div style="position:absolute;left:181px;top:297px;width:1px;height:20px;background-image:linear-gradient(180deg,#c6c6ca 3px,transparent 3px);background-size:1px 5px"></div>
<div style="position:absolute;left:498px;top:297px;width:1px;height:20px;background-image:linear-gradient(180deg,#c6c6ca 3px,transparent 3px);background-size:1px 5px"></div>
<div style="position:absolute;left:604px;top:297px;width:1px;height:20px;background-image:linear-gradient(180deg,#c6c6ca 3px,transparent 3px);background-size:1px 5px"></div>
<div style="position:absolute;left:711px;top:297px;width:1px;height:20px;background-image:linear-gradient(180deg,#c6c6ca 3px,transparent 3px);background-size:1px 5px"></div>
<div style="position:absolute;left:806px;top:297px;width:1px;height:20px;background-image:linear-gradient(180deg,#c6c6ca 3px,transparent 3px);background-size:1px 5px"></div>
<div style="position:absolute;left:896px;top:297px;width:1px;height:20px;background-image:linear-gradient(180deg,#c6c6ca 3px,transparent 3px);background-size:1px 5px"></div>
<div style="position:absolute;left:986px;top:297px;width:1px;height:20px;background-image:linear-gradient(180deg,#c6c6ca 3px,transparent 3px);background-size:1px 5px"></div>
<div style="position:absolute;left:57px;top:302px;width:11px;height:11px;border:1.3px solid #2a2a2a;border-radius:1px;border-bottom-color:transparent"></div>
<div style="position:absolute;left:77px;top:296.9px;height:20px;line-height:20px;white-space:nowrap;font-size:10.9px;color:#222">02.02.02</div>
<div style="position:absolute;left:185px;top:296.9px;height:20px;line-height:20px;white-space:nowrap;font-size:11.6px;color:#222">Устройство монолитного перекрытия цокольного этажа</div>
<div style="position:absolute;left:507px;top:296.9px;height:20px;line-height:20px;white-space:nowrap;font-size:11.5px;color:#222">21.05.2025 09:00</div>
<div style="position:absolute;left:614px;top:296.9px;height:20px;line-height:20px;white-space:nowrap;font-size:11.5px;color:#222">25.05.2025 18:00</div>
<div style="position:absolute;left:711px;top:296.9px;width:91px;height:20px;line-height:20px;white-space:nowrap;font-size:11.5px;color:#222;text-align:right">24</div>
<svg style="position:absolute;left:844.50px;top:299.00px" width="13.00" height="16.00" viewBox="0 0 13 16"><path d="M3.3 7 V4.8 A3.2 3.2 0 0 1 9.7 4.8 V7" fill="none" stroke="#128212" stroke-width="2.1"/><rect x="0.5" y="6.8" width="12" height="8.7" rx="1.6" fill="#128212"/></svg>
<svg style="position:absolute;left:935px;top:299.5px" width="12" height="13" viewBox="0 0 12 13" stroke="#f0141e" stroke-width="1.9" stroke-linecap="butt"><path d="M6 0.5 V12.5 M0.8 3.5 L11.2 9.5 M0.8 9.5 L11.2 3.5"/></svg>
<div style="position:absolute;left:0px;top:317px;width:19px;height:20px;line-height:20px;white-space:nowrap;font-size:9.8px;color:#222;text-align:center">17</div>
<div style="position:absolute;left:19px;top:317px;width:9px;height:20px;background:#163862"></div>
<div style="position:absolute;left:28px;top:317px;width:9px;height:20px;background:#1c4a82"></div>
<div style="position:absolute;left:37px;top:317px;width:9px;height:20px;background:#225c9e"></div>
<div style="position:absolute;left:46px;top:317px;width:9px;height:20px;background:#2a6cbd"></div>
<div style="position:absolute;left:19px;top:317px;width:36px;height:1px;background-image:linear-gradient(90deg,rgba(255,255,255,0.13) 3px,transparent 3px);background-size:5px 1px"></div>
<div style="position:absolute;left:55px;top:317px;width:751px;height:20px;background:#fff"></div>
<div style="position:absolute;left:806px;top:317px;width:180px;height:20px;background:#efefef"></div>
<div style="position:absolute;left:55px;top:336px;width:931px;height:1px;background-image:linear-gradient(90deg,#bdbdc1 3px,transparent 3px);background-size:5px 1px"></div>
<div style="position:absolute;left:181px;top:317px;width:1px;height:20px;background-image:linear-gradient(180deg,#c6c6ca 3px,transparent 3px);background-size:1px 5px"></div>
<div style="position:absolute;left:498px;top:317px;width:1px;height:20px;background-image:linear-gradient(180deg,#c6c6ca 3px,transparent 3px);background-size:1px 5px"></div>
<div style="position:absolute;left:604px;top:317px;width:1px;height:20px;background-image:linear-gradient(180deg,#c6c6ca 3px,transparent 3px);background-size:1px 5px"></div>
<div style="position:absolute;left:711px;top:317px;width:1px;height:20px;background-image:linear-gradient(180deg,#c6c6ca 3px,transparent 3px);background-size:1px 5px"></div>
<div style="position:absolute;left:806px;top:317px;width:1px;height:20px;background-image:linear-gradient(180deg,#c6c6ca 3px,transparent 3px);background-size:1px 5px"></div>
<div style="position:absolute;left:896px;top:317px;width:1px;height:20px;background-image:linear-gradient(180deg,#c6c6ca 3px,transparent 3px);background-size:1px 5px"></div>
<div style="position:absolute;left:986px;top:317px;width:1px;height:20px;background-image:linear-gradient(180deg,#c6c6ca 3px,transparent 3px);background-size:1px 5px"></div>
<div style="position:absolute;left:57px;top:322px;width:11px;height:11px;border:1.3px solid #2a2a2a;border-radius:1px"></div>
<div style="position:absolute;left:77px;top:316.9px;height:20px;line-height:20px;white-space:nowrap;font-size:10.9px;color:#222">02.02.03</div>
<div style="position:absolute;left:185px;top:316.9px;height:20px;line-height:20px;white-space:nowrap;font-size:11.6px;color:#222">Устройство монолитной входной лестницы</div>
<div style="position:absolute;left:507px;top:316.9px;height:20px;line-height:20px;white-space:nowrap;font-size:11.5px;color:#222">28.05.2025 09:00</div>
<div style="position:absolute;left:614px;top:316.9px;height:20px;line-height:20px;white-space:nowrap;font-size:11.5px;color:#222">29.05.2025 18:00</div>
<div style="position:absolute;left:711px;top:316.9px;width:91px;height:20px;line-height:20px;white-space:nowrap;font-size:11.5px;color:#222;text-align:right">86</div>
<svg style="position:absolute;left:844.50px;top:319.00px" width="13.00" height="16.00" viewBox="0 0 13 16"><path d="M3.3 7 V4.8 A3.2 3.2 0 0 1 9.7 4.8 V7" fill="none" stroke="#128212" stroke-width="2.1"/><rect x="0.5" y="6.8" width="12" height="8.7" rx="1.6" fill="#128212"/></svg>
<svg style="position:absolute;left:935px;top:319.5px" width="12" height="13" viewBox="0 0 12 13" stroke="#f0141e" stroke-width="1.9" stroke-linecap="butt"><path d="M6 0.5 V12.5 M0.8 3.5 L11.2 9.5 M0.8 9.5 L11.2 3.5"/></svg>
<div style="position:absolute;left:0px;top:337px;width:19px;height:20px;line-height:20px;white-space:nowrap;font-size:9.8px;color:#222;text-align:center">18</div>
<div style="position:absolute;left:19px;top:337px;width:9px;height:20px;background:#163862"></div>
<div style="position:absolute;left:28px;top:337px;width:9px;height:20px;background:#1c4a82"></div>
<div style="position:absolute;left:37px;top:337px;width:9px;height:20px;background:#225c9e"></div>
<div style="position:absolute;left:19px;top:337px;width:27px;height:1px;background-image:linear-gradient(90deg,rgba(255,255,255,0.13) 3px,transparent 3px);background-size:5px 1px"></div>
<div style="position:absolute;left:46px;top:337px;width:940px;height:20px;background:#2a6cbd"></div>
<div style="position:absolute;left:46px;top:337px;width:940px;height:1px;background:rgba(255,255,255,0.08)"></div>
<div style="position:absolute;left:498px;top:337px;width:1px;height:20px;background:rgba(255,255,255,0.10)"></div>
<div style="position:absolute;left:604px;top:337px;width:1px;height:20px;background:rgba(255,255,255,0.10)"></div>
<div style="position:absolute;left:711px;top:337px;width:1px;height:20px;background:rgba(255,255,255,0.10)"></div>
<div style="position:absolute;left:806px;top:337px;width:1px;height:20px;background:rgba(255,255,255,0.10)"></div>
<div style="position:absolute;left:896px;top:337px;width:1px;height:20px;background:rgba(255,255,255,0.10)"></div>
<div style="position:absolute;left:46px;top:346px;width:9px;height:2px;background:#fff"></div>
<div style="position:absolute;left:57px;top:342px;width:11px;height:11px;border:1.1px solid #fff"></div>
<div style="position:absolute;left:77px;top:337.4px;height:20px;line-height:20px;white-space:nowrap;font-size:10.4px;font-weight:bold;color:#fff">OP_syn.1.1.2.1.2.03</div>
<div style="position:absolute;left:185px;top:336.9px;height:20px;line-height:20px;white-space:nowrap;font-size:10.75px;font-weight:bold;color:#fff">Монолитные работы надземной части</div>
<div style="position:absolute;left:507px;top:336.9px;height:20px;line-height:20px;white-space:nowrap;font-size:11.4px;font-weight:bold;color:#fff;letter-spacing:-0.05px">26.05.2025 09:00</div>
<div style="position:absolute;left:614px;top:336.9px;height:20px;line-height:20px;white-space:nowrap;font-size:11.4px;font-weight:bold;color:#fff;letter-spacing:-0.05px">21.06.2025 18:00</div>
<div style="position:absolute;left:711px;top:336.9px;width:91px;height:20px;line-height:20px;white-space:nowrap;font-size:11px;font-weight:bold;color:#fff;text-align:right">0</div>
<div style="position:absolute;left:0px;top:357px;width:19px;height:20px;line-height:20px;white-space:nowrap;font-size:9.8px;color:#222;text-align:center">19</div>
<div style="position:absolute;left:19px;top:357px;width:9px;height:20px;background:#163862"></div>
<div style="position:absolute;left:28px;top:357px;width:9px;height:20px;background:#1c4a82"></div>
<div style="position:absolute;left:37px;top:357px;width:9px;height:20px;background:#225c9e"></div>
<div style="position:absolute;left:46px;top:357px;width:9px;height:20px;background:#2a6cbd"></div>
<div style="position:absolute;left:19px;top:357px;width:36px;height:1px;background-image:linear-gradient(90deg,rgba(255,255,255,0.13) 3px,transparent 3px);background-size:5px 1px"></div>
<div style="position:absolute;left:55px;top:357px;width:751px;height:20px;background:#fff"></div>
<div style="position:absolute;left:806px;top:357px;width:180px;height:20px;background:#efefef"></div>
<div style="position:absolute;left:55px;top:376px;width:931px;height:1px;background-image:linear-gradient(90deg,#bdbdc1 3px,transparent 3px);background-size:5px 1px"></div>
<div style="position:absolute;left:181px;top:357px;width:1px;height:20px;background-image:linear-gradient(180deg,#c6c6ca 3px,transparent 3px);background-size:1px 5px"></div>
<div style="position:absolute;left:498px;top:357px;width:1px;height:20px;background-image:linear-gradient(180deg,#c6c6ca 3px,transparent 3px);background-size:1px 5px"></div>
<div style="position:absolute;left:604px;top:357px;width:1px;height:20px;background-image:linear-gradient(180deg,#c6c6ca 3px,transparent 3px);background-size:1px 5px"></div>
<div style="position:absolute;left:711px;top:357px;width:1px;height:20px;background-image:linear-gradient(180deg,#c6c6ca 3px,transparent 3px);background-size:1px 5px"></div>
<div style="position:absolute;left:806px;top:357px;width:1px;height:20px;background-image:linear-gradient(180deg,#c6c6ca 3px,transparent 3px);background-size:1px 5px"></div>
<div style="position:absolute;left:896px;top:357px;width:1px;height:20px;background-image:linear-gradient(180deg,#c6c6ca 3px,transparent 3px);background-size:1px 5px"></div>
<div style="position:absolute;left:986px;top:357px;width:1px;height:20px;background-image:linear-gradient(180deg,#c6c6ca 3px,transparent 3px);background-size:1px 5px"></div>
<div style="position:absolute;left:57px;top:362px;width:11px;height:11px;border:1.3px solid #2a2a2a;border-radius:1px"></div>
<div style="position:absolute;left:77px;top:356.4px;height:20px;line-height:20px;white-space:nowrap;font-size:10.9px;color:#222">02.03.01</div>
<div style="position:absolute;left:185px;top:356.4px;height:20px;line-height:20px;white-space:nowrap;font-size:11.6px;color:#222">Устройство наружных монолитных стен 1-го этажа</div>
<div style="position:absolute;left:507px;top:356.4px;height:20px;line-height:20px;white-space:nowrap;font-size:11.5px;color:#222">26.05.2025 09:00</div>
<div style="position:absolute;left:614px;top:356.4px;height:20px;line-height:20px;white-space:nowrap;font-size:11.5px;color:#222">27.05.2025 18:00</div>
<div style="position:absolute;left:711px;top:356.4px;width:91px;height:20px;line-height:20px;white-space:nowrap;font-size:11.5px;color:#222;text-align:right">49</div>
<svg style="position:absolute;left:844.50px;top:359.00px" width="13.00" height="16.00" viewBox="0 0 13 16"><path d="M3.3 7 V4.8 A3.2 3.2 0 0 1 9.7 4.8 V7" fill="none" stroke="#128212" stroke-width="2.1"/><rect x="0.5" y="6.8" width="12" height="8.7" rx="1.6" fill="#128212"/></svg>
<svg style="position:absolute;left:935px;top:359.5px" width="12" height="13" viewBox="0 0 12 13" stroke="#f0141e" stroke-width="1.9" stroke-linecap="butt"><path d="M6 0.5 V12.5 M0.8 3.5 L11.2 9.5 M0.8 9.5 L11.2 3.5"/></svg>
<div style="position:absolute;left:0px;top:377px;width:19px;height:20px;line-height:20px;white-space:nowrap;font-size:9.8px;color:#222;text-align:center">20</div>
<div style="position:absolute;left:19px;top:377px;width:9px;height:20px;background:#163862"></div>
<div style="position:absolute;left:28px;top:377px;width:9px;height:20px;background:#1c4a82"></div>
<div style="position:absolute;left:37px;top:377px;width:9px;height:20px;background:#225c9e"></div>
<div style="position:absolute;left:46px;top:377px;width:9px;height:20px;background:#2a6cbd"></div>
<div style="position:absolute;left:19px;top:377px;width:36px;height:1px;background-image:linear-gradient(90deg,rgba(255,255,255,0.13) 3px,transparent 3px);background-size:5px 1px"></div>
<div style="position:absolute;left:55px;top:377px;width:751px;height:20px;background:#fff"></div>
<div style="position:absolute;left:806px;top:377px;width:180px;height:20px;background:#efefef"></div>
<div style="position:absolute;left:55px;top:396px;width:931px;height:1px;background-image:linear-gradient(90deg,#bdbdc1 3px,transparent 3px);background-size:5px 1px"></div>
<div style="position:absolute;left:181px;top:377px;width:1px;height:20px;background-image:linear-gradient(180deg,#c6c6ca 3px,transparent 3px);background-size:1px 5px"></div>
<div style="position:absolute;left:498px;top:377px;width:1px;height:20px;background-image:linear-gradient(180deg,#c6c6ca 3px,transparent 3px);background-size:1px 5px"></div>
<div style="position:absolute;left:604px;top:377px;width:1px;height:20px;background-image:linear-gradient(180deg,#c6c6ca 3px,transparent 3px);background-size:1px 5px"></div>
<div style="position:absolute;left:711px;top:377px;width:1px;height:20px;background-image:linear-gradient(180deg,#c6c6ca 3px,transparent 3px);background-size:1px 5px"></div>
<div style="position:absolute;left:806px;top:377px;width:1px;height:20px;background-image:linear-gradient(180deg,#c6c6ca 3px,transparent 3px);background-size:1px 5px"></div>
<div style="position:absolute;left:896px;top:377px;width:1px;height:20px;background-image:linear-gradient(180deg,#c6c6ca 3px,transparent 3px);background-size:1px 5px"></div>
<div style="position:absolute;left:986px;top:377px;width:1px;height:20px;background-image:linear-gradient(180deg,#c6c6ca 3px,transparent 3px);background-size:1px 5px"></div>
<div style="position:absolute;left:57px;top:382px;width:11px;height:11px;border:1.3px solid #2a2a2a;border-radius:1px"></div>
<div style="position:absolute;left:77px;top:376.4px;height:20px;line-height:20px;white-space:nowrap;font-size:10.9px;color:#222">02.03.02</div>
<div style="position:absolute;left:185px;top:376.4px;height:20px;line-height:20px;white-space:nowrap;font-size:11.6px;color:#222">Устройство внутренних монолитных стен 1-го этажа</div>
<div style="position:absolute;left:507px;top:376.4px;height:20px;line-height:20px;white-space:nowrap;font-size:11.5px;color:#222">26.05.2025 09:00</div>
<div style="position:absolute;left:614px;top:376.4px;height:20px;line-height:20px;white-space:nowrap;font-size:11.5px;color:#222">27.05.2025 18:00</div>
<div style="position:absolute;left:711px;top:376.4px;width:91px;height:20px;line-height:20px;white-space:nowrap;font-size:11.5px;color:#222;text-align:right">32</div>
<svg style="position:absolute;left:844.50px;top:379.00px" width="13.00" height="16.00" viewBox="0 0 13 16"><path d="M3.3 7 V4.8 A3.2 3.2 0 0 1 9.7 4.8 V7" fill="none" stroke="#128212" stroke-width="2.1"/><rect x="0.5" y="6.8" width="12" height="8.7" rx="1.6" fill="#128212"/></svg>
<svg style="position:absolute;left:935px;top:379.5px" width="12" height="13" viewBox="0 0 12 13" stroke="#f0141e" stroke-width="1.9" stroke-linecap="butt"><path d="M6 0.5 V12.5 M0.8 3.5 L11.2 9.5 M0.8 9.5 L11.2 3.5"/></svg>
<div style="position:absolute;left:0px;top:397px;width:19px;height:19px;line-height:19px;white-space:nowrap;font-size:9.8px;color:#222;text-align:center">21</div>
<div style="position:absolute;left:19px;top:397px;width:9px;height:19px;background:#163862"></div>
<div style="position:absolute;left:28px;top:397px;width:9px;height:19px;background:#1c4a82"></div>
<div style="position:absolute;left:37px;top:397px;width:9px;height:19px;background:#225c9e"></div>
<div style="position:absolute;left:46px;top:397px;width:9px;height:19px;background:#2a6cbd"></div>
<div style="position:absolute;left:19px;top:397px;width:36px;height:1px;background-image:linear-gradient(90deg,rgba(255,255,255,0.13) 3px,transparent 3px);background-size:5px 1px"></div>
<div style="position:absolute;left:55px;top:397px;width:751px;height:19px;background:#fff"></div>
<div style="position:absolute;left:806px;top:397px;width:180px;height:19px;background:#efefef"></div>
<div style="position:absolute;left:55px;top:415px;width:931px;height:1px;background-image:linear-gradient(90deg,#bdbdc1 3px,transparent 3px);background-size:5px 1px"></div>
<div style="position:absolute;left:181px;top:397px;width:1px;height:19px;background-image:linear-gradient(180deg,#c6c6ca 3px,transparent 3px);background-size:1px 5px"></div>
<div style="position:absolute;left:498px;top:397px;width:1px;height:19px;background-image:linear-gradient(180deg,#c6c6ca 3px,transparent 3px);background-size:1px 5px"></div>
<div style="position:absolute;left:604px;top:397px;width:1px;height:19px;background-image:linear-gradient(180deg,#c6c6ca 3px,transparent 3px);background-size:1px 5px"></div>
<div style="position:absolute;left:711px;top:397px;width:1px;height:19px;background-image:linear-gradient(180deg,#c6c6ca 3px,transparent 3px);background-size:1px 5px"></div>
<div style="position:absolute;left:806px;top:397px;width:1px;height:19px;background-image:linear-gradient(180deg,#c6c6ca 3px,transparent 3px);background-size:1px 5px"></div>
<div style="position:absolute;left:896px;top:397px;width:1px;height:19px;background-image:linear-gradient(180deg,#c6c6ca 3px,transparent 3px);background-size:1px 5px"></div>
<div style="position:absolute;left:986px;top:397px;width:1px;height:19px;background-image:linear-gradient(180deg,#c6c6ca 3px,transparent 3px);background-size:1px 5px"></div>
<div style="position:absolute;left:57px;top:402px;width:11px;height:11px;border:1.3px solid #2a2a2a;border-radius:1px;border-bottom-color:transparent"></div>
<div style="position:absolute;left:77px;top:395.9px;height:19px;line-height:19px;white-space:nowrap;font-size:10.9px;color:#222">02.03.03</div>
<div style="position:absolute;left:185px;top:395.9px;height:19px;line-height:19px;white-space:nowrap;font-size:11.6px;color:#222">Устройство монолитной лестницы 1-го этажа</div>
<div style="position:absolute;left:507px;top:395.9px;height:19px;line-height:19px;white-space:nowrap;font-size:11.5px;color:#222">28.05.2025 09:00</div>
<div style="position:absolute;left:614px;top:395.9px;height:19px;line-height:19px;white-space:nowrap;font-size:11.5px;color:#222">02.06.2025 18:00</div>
<div style="position:absolute;left:711px;top:395.9px;width:91px;height:19px;line-height:19px;white-space:nowrap;font-size:11.5px;color:#222;text-align:right">73</div>
<svg style="position:absolute;left:844.50px;top:398.50px" width="13.00" height="16.00" viewBox="0 0 13 16"><path d="M3.3 7 V4.8 A3.2 3.2 0 0 1 9.7 4.8 V7" fill="none" stroke="#128212" stroke-width="2.1"/><rect x="0.5" y="6.8" width="12" height="8.7" rx="1.6" fill="#128212"/></svg>
<svg style="position:absolute;left:935px;top:399.0px" width="12" height="13" viewBox="0 0 12 13" stroke="#f0141e" stroke-width="1.9" stroke-linecap="butt"><path d="M6 0.5 V12.5 M0.8 3.5 L11.2 9.5 M0.8 9.5 L11.2 3.5"/></svg>
<div style="position:absolute;left:0px;top:416px;width:19px;height:20px;line-height:20px;white-space:nowrap;font-size:9.8px;color:#222;text-align:center">22</div>
<div style="position:absolute;left:19px;top:416px;width:9px;height:20px;background:#163862"></div>
<div style="position:absolute;left:28px;top:416px;width:9px;height:20px;background:#1c4a82"></div>
<div style="position:absolute;left:37px;top:416px;width:9px;height:20px;background:#225c9e"></div>
<div style="position:absolute;left:46px;top:416px;width:9px;height:20px;background:#2a6cbd"></div>
<div style="position:absolute;left:19px;top:416px;width:36px;height:1px;background-image:linear-gradient(90deg,rgba(255,255,255,0.13) 3px,transparent 3px);background-size:5px 1px"></div>
<div style="position:absolute;left:55px;top:416px;width:751px;height:20px;background:#fff"></div>
<div style="position:absolute;left:806px;top:416px;width:180px;height:20px;background:#efefef"></div>
<div style="position:absolute;left:55px;top:435px;width:931px;height:1px;background-image:linear-gradient(90deg,#bdbdc1 3px,transparent 3px);background-size:5px 1px"></div>
<div style="position:absolute;left:181px;top:416px;width:1px;height:20px;background-image:linear-gradient(180deg,#c6c6ca 3px,transparent 3px);background-size:1px 5px"></div>
<div style="position:absolute;left:498px;top:416px;width:1px;height:20px;background-image:linear-gradient(180deg,#c6c6ca 3px,transparent 3px);background-size:1px 5px"></div>
<div style="position:absolute;left:604px;top:416px;width:1px;height:20px;background-image:linear-gradient(180deg,#c6c6ca 3px,transparent 3px);background-size:1px 5px"></div>
<div style="position:absolute;left:711px;top:416px;width:1px;height:20px;background-image:linear-gradient(180deg,#c6c6ca 3px,transparent 3px);background-size:1px 5px"></div>
<div style="position:absolute;left:806px;top:416px;width:1px;height:20px;background-image:linear-gradient(180deg,#c6c6ca 3px,transparent 3px);background-size:1px 5px"></div>
<div style="position:absolute;left:896px;top:416px;width:1px;height:20px;background-image:linear-gradient(180deg,#c6c6ca 3px,transparent 3px);background-size:1px 5px"></div>
<div style="position:absolute;left:986px;top:416px;width:1px;height:20px;background-image:linear-gradient(180deg,#c6c6ca 3px,transparent 3px);background-size:1px 5px"></div>
<div style="position:absolute;left:57px;top:421px;width:11px;height:11px;border:1.3px solid #2a2a2a;border-radius:1px"></div>
<div style="position:absolute;left:77px;top:415.9px;height:20px;line-height:20px;white-space:nowrap;font-size:10.9px;color:#222">02.03.04</div>
<div style="position:absolute;left:185px;top:415.9px;height:20px;line-height:20px;white-space:nowrap;font-size:11.6px;color:#222">Устройство монолитного перекрытия 1-го этажа</div>
<div style="position:absolute;left:507px;top:415.9px;height:20px;line-height:20px;white-space:nowrap;font-size:11.5px;color:#222">03.06.2025 09:00</div>
<div style="position:absolute;left:614px;top:415.9px;height:20px;line-height:20px;white-space:nowrap;font-size:11.5px;color:#222">05.06.2025 18:00</div>
<div style="position:absolute;left:711px;top:415.9px;width:91px;height:20px;line-height:20px;white-space:nowrap;font-size:11.5px;color:#222;text-align:right">21</div>
<svg style="position:absolute;left:844.50px;top:418.00px" width="13.00" height="16.00" viewBox="0 0 13 16"><path d="M3.3 7 V4.8 A3.2 3.2 0 0 1 9.7 4.8 V7" fill="none" stroke="#128212" stroke-width="2.1"/><rect x="0.5" y="6.8" width="12" height="8.7" rx="1.6" fill="#128212"/></svg>
<svg style="position:absolute;left:935px;top:418.5px" width="12" height="13" viewBox="0 0 12 13" stroke="#f0141e" stroke-width="1.9" stroke-linecap="butt"><path d="M6 0.5 V12.5 M0.8 3.5 L11.2 9.5 M0.8 9.5 L11.2 3.5"/></svg>
<div style="position:absolute;left:0px;top:436px;width:19px;height:20px;line-height:20px;white-space:nowrap;font-size:9.8px;color:#222;text-align:center">23</div>
<div style="position:absolute;left:19px;top:436px;width:9px;height:20px;background:#163862"></div>
<div style="position:absolute;left:28px;top:436px;width:9px;height:20px;background:#1c4a82"></div>
<div style="position:absolute;left:37px;top:436px;width:9px;height:20px;background:#225c9e"></div>
<div style="position:absolute;left:46px;top:436px;width:9px;height:20px;background:#2a6cbd"></div>
<div style="position:absolute;left:19px;top:436px;width:36px;height:1px;background-image:linear-gradient(90deg,rgba(255,255,255,0.13) 3px,transparent 3px);background-size:5px 1px"></div>
<div style="position:absolute;left:55px;top:436px;width:751px;height:20px;background:#fff"></div>
<div style="position:absolute;left:806px;top:436px;width:180px;height:20px;background:#efefef"></div>
<div style="position:absolute;left:55px;top:455px;width:931px;height:1px;background-image:linear-gradient(90deg,#bdbdc1 3px,transparent 3px);background-size:5px 1px"></div>
<div style="position:absolute;left:181px;top:436px;width:1px;height:20px;background-image:linear-gradient(180deg,#c6c6ca 3px,transparent 3px);background-size:1px 5px"></div>
<div style="position:absolute;left:498px;top:436px;width:1px;height:20px;background-image:linear-gradient(180deg,#c6c6ca 3px,transparent 3px);background-size:1px 5px"></div>
<div style="position:absolute;left:604px;top:436px;width:1px;height:20px;background-image:linear-gradient(180deg,#c6c6ca 3px,transparent 3px);background-size:1px 5px"></div>
<div style="position:absolute;left:711px;top:436px;width:1px;height:20px;background-image:linear-gradient(180deg,#c6c6ca 3px,transparent 3px);background-size:1px 5px"></div>
<div style="position:absolute;left:806px;top:436px;width:1px;height:20px;background-image:linear-gradient(180deg,#c6c6ca 3px,transparent 3px);background-size:1px 5px"></div>
<div style="position:absolute;left:896px;top:436px;width:1px;height:20px;background-image:linear-gradient(180deg,#c6c6ca 3px,transparent 3px);background-size:1px 5px"></div>
<div style="position:absolute;left:986px;top:436px;width:1px;height:20px;background-image:linear-gradient(180deg,#c6c6ca 3px,transparent 3px);background-size:1px 5px"></div>
<div style="position:absolute;left:57px;top:441px;width:11px;height:11px;border:1.3px solid #2a2a2a;border-radius:1px"></div>
<div style="position:absolute;left:77px;top:435.9px;height:20px;line-height:20px;white-space:nowrap;font-size:10.9px;color:#222">02.03.05</div>
<div style="position:absolute;left:185px;top:435.9px;height:20px;line-height:20px;white-space:nowrap;font-size:11.6px;color:#222">Устройство наружных монолитных стен 2-го этажа</div>
<div style="position:absolute;left:507px;top:435.9px;height:20px;line-height:20px;white-space:nowrap;font-size:11.5px;color:#222">06.06.2025 09:00</div>
<div style="position:absolute;left:614px;top:435.9px;height:20px;line-height:20px;white-space:nowrap;font-size:11.5px;color:#222">07.06.2025 18:00</div>
<div style="position:absolute;left:711px;top:435.9px;width:91px;height:20px;line-height:20px;white-space:nowrap;font-size:11.5px;color:#222;text-align:right">100</div>
<svg style="position:absolute;left:844.50px;top:438.00px" width="13.00" height="16.00" viewBox="0 0 13 16"><path d="M3.3 7 V4.8 A3.2 3.2 0 0 1 9.7 4.8 V7" fill="none" stroke="#1010e6" stroke-width="2.1"/><rect x="0.5" y="6.8" width="12" height="8.7" rx="1.6" fill="#1010e6"/></svg>
<svg style="position:absolute;left:935px;top:438.5px" width="12" height="13" viewBox="0 0 12 13" stroke="#1a8a1a" stroke-width="1.9" stroke-linecap="butt"><path d="M6 0.5 V12.5 M0.8 3.5 L11.2 9.5 M0.8 9.5 L11.2 3.5"/></svg>
<div style="position:absolute;left:0px;top:456px;width:19px;height:20px;line-height:20px;white-space:nowrap;font-size:9.8px;color:#222;text-align:center">24</div>
<div style="position:absolute;left:19px;top:456px;width:9px;height:20px;background:#163862"></div>
<div style="position:absolute;left:28px;top:456px;width:9px;height:20px;background:#1c4a82"></div>
<div style="position:absolute;left:37px;top:456px;width:9px;height:20px;background:#225c9e"></div>
<div style="position:absolute;left:46px;top:456px;width:9px;height:20px;background:#2a6cbd"></div>
<div style="position:absolute;left:19px;top:456px;width:36px;height:1px;background-image:linear-gradient(90deg,rgba(255,255,255,0.13) 3px,transparent 3px);background-size:5px 1px"></div>
<div style="position:absolute;left:55px;top:456px;width:751px;height:20px;background:#fff"></div>
<div style="position:absolute;left:806px;top:456px;width:180px;height:20px;background:#efefef"></div>
<div style="position:absolute;left:55px;top:475px;width:931px;height:1px;background-image:linear-gradient(90deg,#bdbdc1 3px,transparent 3px);background-size:5px 1px"></div>
<div style="position:absolute;left:181px;top:456px;width:1px;height:20px;background-image:linear-gradient(180deg,#c6c6ca 3px,transparent 3px);background-size:1px 5px"></div>
<div style="position:absolute;left:498px;top:456px;width:1px;height:20px;background-image:linear-gradient(180deg,#c6c6ca 3px,transparent 3px);background-size:1px 5px"></div>
<div style="position:absolute;left:604px;top:456px;width:1px;height:20px;background-image:linear-gradient(180deg,#c6c6ca 3px,transparent 3px);background-size:1px 5px"></div>
<div style="position:absolute;left:711px;top:456px;width:1px;height:20px;background-image:linear-gradient(180deg,#c6c6ca 3px,transparent 3px);background-size:1px 5px"></div>
<div style="position:absolute;left:806px;top:456px;width:1px;height:20px;background-image:linear-gradient(180deg,#c6c6ca 3px,transparent 3px);background-size:1px 5px"></div>
<div style="position:absolute;left:896px;top:456px;width:1px;height:20px;background-image:linear-gradient(180deg,#c6c6ca 3px,transparent 3px);background-size:1px 5px"></div>
<div style="position:absolute;left:986px;top:456px;width:1px;height:20px;background-image:linear-gradient(180deg,#c6c6ca 3px,transparent 3px);background-size:1px 5px"></div>
<div style="position:absolute;left:57px;top:461px;width:11px;height:11px;border:1.3px solid #2a2a2a;border-radius:1px"></div>
<div style="position:absolute;left:77px;top:455.4px;height:20px;line-height:20px;white-space:nowrap;font-size:10.9px;color:#222">02.03.06</div>
<div style="position:absolute;left:185px;top:455.4px;height:20px;line-height:20px;white-space:nowrap;font-size:11.6px;color:#222"></div>
<div style="position:absolute;left:507px;top:455.4px;height:20px;line-height:20px;white-space:nowrap;font-size:11.5px;color:#222"></div>
<div style="position:absolute;left:614px;top:455.4px;height:20px;line-height:20px;white-space:nowrap;font-size:11.5px;color:#222"></div>
<div style="position:absolute;left:711px;top:455.4px;width:91px;height:20px;line-height:20px;white-space:nowrap;font-size:11.5px;color:#222;text-align:right"></div>
<svg style="position:absolute;left:844.50px;top:458.00px" width="13.00" height="16.00" viewBox="0 0 13 16"><path d="M3.3 7 V4.8 A3.2 3.2 0 0 1 9.7 4.8 V7" fill="none" stroke="#1010e6" stroke-width="2.1"/><rect x="0.5" y="6.8" width="12" height="8.7" rx="1.6" fill="#1010e6"/></svg>
<svg style="position:absolute;left:935px;top:458.5px" width="12" height="13" viewBox="0 0 12 13" stroke="#1a8a1a" stroke-width="1.9" stroke-linecap="butt"><path d="M6 0.5 V12.5 M0.8 3.5 L11.2 9.5 M0.8 9.5 L11.2 3.5"/></svg>
</div>
<svg style="position:absolute;left:860px;top:270px" width="130" height="60" viewBox="860 270 130 60"><ellipse cx="889.7" cy="296.6" rx="16" ry="18" fill="#fff" stroke="#000" stroke-width="3"/><path d="M906 296.6 H963" stroke="#000" stroke-width="3"/><path d="M962 291 L974 296.6 L962 302 Z" fill="#000"/><text x="889.5" y="304" font-family="Liberation Sans" font-size="20" text-anchor="middle" fill="#000">1</text></svg>
<div style="position:absolute;left:1050px;top:82px;width:868px;height:507px;overflow:hidden;background:#fff">
<div style="position:absolute;left:0px;top:22px;width:868px;height:1px;background:#d3d3d8"></div>
<div style="position:absolute;left:0px;top:44.5px;width:868px;height:1px;background:#d3d3d8"></div>
<div style="position:absolute;left:0px;top:0px;width:644.94px;height:22px;line-height:22px;white-space:nowrap;font-size:11.5px;color:#222;text-align:center">2025</div>
<div style="position:absolute;left:646.94px;top:0px;width:223.05999999999995px;height:22px;line-height:22px;white-space:nowrap;font-size:11.5px;color:#222;text-align:center">2026</div>
<div style="position:absolute;left:644.94px;top:0px;width:1px;height:45px;background:#d3d3d8"></div>
<div style="position:absolute;left:48px;top:22px;width:1px;height:23px;background:#d3d3d8"></div>
<div style="position:absolute;left:-9.52800000000002px;top:23px;width:54.656000000000176px;height:23px;line-height:23px;white-space:nowrap;font-size:11.2px;color:#222;text-align:center">февр.</div>
<div style="position:absolute;left:108px;top:22px;width:1px;height:23px;background:#d3d3d8"></div>
<div style="position:absolute;left:45.128000000000156px;top:23px;width:60.511999999999944px;height:23px;line-height:23px;white-space:nowrap;font-size:11.2px;color:#222;text-align:center">март</div>
<div style="position:absolute;left:167px;top:22px;width:1px;height:23px;background:#d3d3d8"></div>
<div style="position:absolute;left:105.6400000000001px;top:23px;width:58.559999999999945px;height:23px;line-height:23px;white-space:nowrap;font-size:11.2px;color:#222;text-align:center">апр.</div>
<div style="position:absolute;left:227px;top:22px;width:1px;height:23px;background:#d3d3d8"></div>
<div style="position:absolute;left:164.20000000000005px;top:23px;width:60.511999999999944px;height:23px;line-height:23px;white-space:nowrap;font-size:11.2px;color:#222;text-align:center">май</div>
<div style="position:absolute;left:286px;top:22px;width:1px;height:23px;background:#d3d3d8"></div>
<div style="position:absolute;left:224.712px;top:23px;width:58.559999999999945px;height:23px;line-height:23px;white-space:nowrap;font-size:11.2px;color:#222;text-align:center">июнь</div>
<div style="position:absolute;left:346px;top:22px;width:1px;height:23px;background:#d3d3d8"></div>
<div style="position:absolute;left:283.27199999999993px;top:23px;width:60.51200000000017px;height:23px;line-height:23px;white-space:nowrap;font-size:11.2px;color:#222;text-align:center">июль</div>
<div style="position:absolute;left:407px;top:22px;width:1px;height:23px;background:#d3d3d8"></div>
<div style="position:absolute;left:343.7840000000001px;top:23px;width:60.511999999999944px;height:23px;line-height:23px;white-space:nowrap;font-size:11.2px;color:#222;text-align:center">авг.</div>
<div style="position:absolute;left:465px;top:22px;width:1px;height:23px;background:#d3d3d8"></div>
<div style="position:absolute;left:404.29600000000005px;top:23px;width:58.559999999999945px;height:23px;line-height:23px;white-space:nowrap;font-size:11.2px;color:#222;text-align:center">сент.</div>
<div style="position:absolute;left:526px;top:22px;width:1px;height:23px;background:#d3d3d8"></div>
<div style="position:absolute;left:462.856px;top:23px;width:60.511999999999944px;height:23px;line-height:23px;white-space:nowrap;font-size:11.2px;color:#222;text-align:center">окт.</div>
<div style="position:absolute;left:584px;top:22px;width:1px;height:23px;background:#d3d3d8"></div>
<div style="position:absolute;left:523.3679999999999px;top:23px;width:58.56000000000017px;height:23px;line-height:23px;white-space:nowrap;font-size:11.2px;color:#222;text-align:center">нояб.</div>
<div style="position:absolute;left:645px;top:22px;width:1px;height:23px;background:#d3d3d8"></div>
<div style="position:absolute;left:581.9280000000001px;top:23px;width:60.511999999999944px;height:23px;line-height:23px;white-space:nowrap;font-size:11.2px;color:#222;text-align:center">дек.</div>
<div style="position:absolute;left:705px;top:22px;width:1px;height:23px;background:#d3d3d8"></div>
<div style="position:absolute;left:642.44px;top:23px;width:60.511999999999944px;height:23px;line-height:23px;white-space:nowrap;font-size:11.2px;color:#222;text-align:center">янв.</div>
<div style="position:absolute;left:760px;top:22px;width:1px;height:23px;background:#d3d3d8"></div>
<div style="position:absolute;left:702.952px;top:23px;width:54.656000000000176px;height:23px;line-height:23px;white-space:nowrap;font-size:11.2px;color:#222;text-align:center">февр.</div>
<div style="position:absolute;left:821px;top:22px;width:1px;height:23px;background:#d3d3d8"></div>
<div style="position:absolute;left:757.6080000000002px;top:23px;width:60.511999999999716px;height:23px;line-height:23px;white-space:nowrap;font-size:11.2px;color:#222;text-align:center">март</div>
<div style="position:absolute;left:879px;top:22px;width:1px;height:23px;background:#d3d3d8"></div>
<div style="position:absolute;left:818.1199999999999px;top:23px;width:58.56000000000017px;height:23px;line-height:23px;white-space:nowrap;font-size:11.2px;color:#222;text-align:center">апр.</div>
<div style="position:absolute;left:0px;top:65.82999999999998px;width:868px;height:1px;background-image:linear-gradient(90deg,#d0d0d4 1.3px,transparent 1.3px);background-size:5.4px 1px"></div>
<div style="position:absolute;left:0px;top:85.66px;width:868px;height:1px;background-image:linear-gradient(90deg,#d0d0d4 1.3px,transparent 1.3px);background-size:5.4px 1px"></div>
<div style="position:absolute;left:0px;top:105.49000000000001px;width:868px;height:1px;background-image:linear-gradient(90deg,#d0d0d4 1.3px,transparent 1.3px);background-size:5.4px 1px"></div>
<div style="position:absolute;left:0px;top:125.32px;width:868px;height:1px;background-image:linear-gradient(90deg,#d0d0d4 1.3px,transparent 1.3px);background-size:5.4px 1px"></div>
<div style="position:absolute;left:0px;top:145.14999999999998px;width:868px;height:1px;background-image:linear-gradient(90deg,#d0d0d4 1.3px,transparent 1.3px);background-size:5.4px 1px"></div>
<div style="position:absolute;left:0px;top:164.98px;width:868px;height:1px;background-image:linear-gradient(90deg,#d0d0d4 1.3px,transparent 1.3px);background-size:5.4px 1px"></div>
<div style="position:absolute;left:0px;top:184.81px;width:868px;height:1px;background-image:linear-gradient(90deg,#d0d0d4 1.3px,transparent 1.3px);background-size:5.4px 1px"></div>
<div style="position:absolute;left:0px;top:204.64px;width:868px;height:1px;background-image:linear-gradient(90deg,#d0d0d4 1.3px,transparent 1.3px);background-size:5.4px 1px"></div>
<div style="position:absolute;left:0px;top:224.46999999999997px;width:868px;height:1px;background-image:linear-gradient(90deg,#d0d0d4 1.3px,transparent 1.3px);background-size:5.4px 1px"></div>
<div style="position:absolute;left:0px;top:244.29999999999995px;width:868px;height:1px;background-image:linear-gradient(90deg,#d0d0d4 1.3px,transparent 1.3px);background-size:5.4px 1px"></div>
<div style="position:absolute;left:0px;top:264.13px;width:868px;height:1px;background-image:linear-gradient(90deg,#d0d0d4 1.3px,transparent 1.3px);background-size:5.4px 1px"></div>
<div style="position:absolute;left:0px;top:283.96px;width:868px;height:1px;background-image:linear-gradient(90deg,#d0d0d4 1.3px,transparent 1.3px);background-size:5.4px 1px"></div>
<div style="position:absolute;left:0px;top:303.78999999999996px;width:868px;height:1px;background-image:linear-gradient(90deg,#d0d0d4 1.3px,transparent 1.3px);background-size:5.4px 1px"></div>
<div style="position:absolute;left:0px;top:323.62px;width:868px;height:1px;background-image:linear-gradient(90deg,#d0d0d4 1.3px,transparent 1.3px);background-size:5.4px 1px"></div>
<div style="position:absolute;left:0px;top:343.45px;width:868px;height:1px;background-image:linear-gradient(90deg,#d0d0d4 1.3px,transparent 1.3px);background-size:5.4px 1px"></div>
<div style="position:absolute;left:0px;top:363.28px;width:868px;height:1px;background-image:linear-gradient(90deg,#d0d0d4 1.3px,transparent 1.3px);background-size:5.4px 1px"></div>
<div style="position:absolute;left:0px;top:383.10999999999996px;width:868px;height:1px;background-image:linear-gradient(90deg,#d0d0d4 1.3px,transparent 1.3px);background-size:5.4px 1px"></div>
<div style="position:absolute;left:0px;top:402.93999999999994px;width:868px;height:1px;background-image:linear-gradient(90deg,#d0d0d4 1.3px,transparent 1.3px);background-size:5.4px 1px"></div>
<div style="position:absolute;left:0px;top:422.77px;width:868px;height:1px;background-image:linear-gradient(90deg,#d0d0d4 1.3px,transparent 1.3px);background-size:5.4px 1px"></div>
<div style="position:absolute;left:0px;top:442.5999999999999px;width:868px;height:1px;background-image:linear-gradient(90deg,#d0d0d4 1.3px,transparent 1.3px);background-size:5.4px 1px"></div>
<div style="position:absolute;left:0px;top:462.42999999999995px;width:868px;height:1px;background-image:linear-gradient(90deg,#d0d0d4 1.3px,transparent 1.3px);background-size:5.4px 1px"></div>
<div style="position:absolute;left:0px;top:482.26px;width:868px;height:1px;background-image:linear-gradient(90deg,#d0d0d4 1.3px,transparent 1.3px);background-size:5.4px 1px"></div>
<div style="position:absolute;left:0px;top:502.0899999999999px;width:868px;height:1px;background-image:linear-gradient(90deg,#d0d0d4 1.3px,transparent 1.3px);background-size:5.4px 1px"></div>
<div style="position:absolute;left:0px;top:521.92px;width:868px;height:1px;background-image:linear-gradient(90deg,#d0d0d4 1.3px,transparent 1.3px);background-size:5.4px 1px"></div>
<div style="position:absolute;left:0px;top:205.14px;width:868px;height:18.83px;background:#fdfbd3"></div>
<svg style="position:absolute;left:0;top:0" width="868" height="507" viewBox="1050 82 868 507" font-family="Liberation Sans"><path d="M1216 131.0 H1742.6 V136.5 L1739.1 134.0 H1219.5 L1216 136.5 Z" fill="#a9a9ab"/><path d="M1213 139.0 H1758.5 V145.0 L1754.5 142.0 H1217 L1213 145.0 Z" fill="#000"/><text x="1776.5" y="142.0" font-size="11.6" font-weight="normal" fill="#464646">Отель Речной</text><path d="M1216 150.82999999999998 H1742.6 V156.32999999999998 L1739.1 153.82999999999998 H1219.5 L1216 156.32999999999998 Z" fill="#a9a9ab"/><path d="M1213 158.82999999999998 H1758.5 V164.82999999999998 L1754.5 161.82999999999998 H1217 L1213 164.82999999999998 Z" fill="#000"/><text x="1776.5" y="161.82999999999998" font-size="11.6" font-weight="normal" fill="#464646">Строительство отеля</text><path d="M1213 170.66 H1226 V176.16 L1222.5 173.66 H1216.5 L1213 176.16 Z" fill="#a9a9ab"/><path d="M1213 178.66 H1226 V184.66 L1222 181.66 H1217 L1213 184.66 Z" fill="#000"/><text x="1244" y="181.66" font-size="10.6" font-weight="bold" fill="#3a3a3a">Земляные работы</text><circle cx="1161" cy="197.405" r="7" fill="#5252f4"/><path d="M1217.4 196.405 V193.905 A3.6 3.6 0 0 1 1224.6 193.905 V196.405" fill="none" stroke="#4b4bf2" stroke-width="2.2"/><rect x="1215" y="195.905" width="12" height="8.5" rx="1.6" fill="#4b4bf2"/><text x="1236.5" y="201.49" font-size="11.65" fill="#5a5a5a">Вертикальная планировка территории</text><circle cx="1167" cy="217.23499999999999" r="7" fill="#5252f4"/><path d="M1217.4 216.23499999999999 V213.73499999999999 A3.6 3.6 0 0 1 1224.6 213.73499999999999 V216.23499999999999" fill="none" stroke="#4b4bf2" stroke-width="2.2"/><rect x="1215" y="215.73499999999999" width="12" height="8.5" rx="1.6" fill="#4b4bf2"/><text x="1240.3" y="221.32" font-size="11.65" fill="#5a5a5a">Устройство котлована</text><circle cx="1171" cy="237.06499999999997" r="7" fill="#5252f4"/><path d="M1217.4 236.06499999999997 V233.56499999999997 A3.6 3.6 0 0 1 1224.6 233.56499999999997 V236.06499999999997" fill="none" stroke="#3e9b3e" stroke-width="2.2"/><rect x="1215" y="235.56499999999997" width="12" height="8.5" rx="1.6" fill="#3e9b3e"/><text x="1244" y="241.14999999999998" font-size="11.65" fill="#5a5a5a">Устройство песчаного основания</text><path d="M1218 203.405 L1218 208.405 L1210 208.405 L1210 221.23499999999999 L1220 221.23499999999999" fill="none" stroke="#000" stroke-width="1.4"/><path d="M1215 217.23499999999999 L1222 221.23499999999999 L1215 225.23499999999999 Z" fill="#000"/><path d="M1222 226.23499999999999 L1222 228.23499999999999 L1212 228.23499999999999 L1212 241.06499999999997 L1222 241.06499999999997" fill="none" stroke="#000" stroke-width="1.4"/><path d="M1217 237.06499999999997 L1224 241.06499999999997 L1217 245.06499999999997 Z" fill="#000"/><path d="M1227 249.98 H1397 V255.48 L1393.5 252.98 H1230.5 L1227 255.48 Z" fill="#a9a9ab"/><path d="M1227 257.98 H1407 V263.98 L1403 260.98 H1231 L1227 263.98 Z" fill="#000"/><text x="1425.8" y="260.98" font-size="10.6" font-weight="bold" fill="#3a3a3a">Общестроительные работы</text><path d="M1227 269.81 H1251 V275.31 L1247.5 272.81 H1230.5 L1227 275.31 Z" fill="#a9a9ab"/><path d="M1227 277.81 H1251 V283.81 L1247 280.81 H1231 L1227 283.81 Z" fill="#000"/><text x="1270" y="280.81" font-size="10.6" font-weight="bold" fill="#3a3a3a">Фундамент</text><path d="M1226 246.06499999999997 L1226 248.06499999999997 L1214 248.06499999999997 L1214 299.555 L1226 299.555" fill="none" stroke="#000" stroke-width="1.4"/><path d="M1221 295.555 L1228 299.555 L1221 303.555 Z" fill="#000"/><circle cx="1175" cy="296.555" r="7" fill="#5252f4"/><path d="M1207 302.555 V291.555 Q1211 289.555 1213 292.555 Q1216 294.555 1218 292.555 V299.555 Q1215 301.555 1213 298.555 Q1210 296.555 1207 298.555" fill="#4a4af0" stroke="#4a4af0" stroke-width="1.3"/><path d="M1230.4 295.555 V293.055 A3.6 3.6 0 0 1 1237.6 293.055 V295.555" fill="none" stroke="#f03a3a" stroke-width="2.2"/><rect x="1228" y="295.055" width="12" height="8.5" rx="1.6" fill="#f03a3a"/><text x="1248.6" y="300.64" font-size="11.65" fill="#5a5a5a">Устройство буронабивных свай захватка 1</text><circle cx="1179" cy="316.385" r="7" fill="#5252f4"/><path d="M1213 322.385 V311.385 Q1217 309.385 1219 312.385 Q1222 314.385 1224 312.385 V319.385 Q1221 321.385 1219 318.385 Q1216 316.385 1213 318.385" fill="#4a4af0" stroke="#4a4af0" stroke-width="1.3"/><path d="M1230.8000000000002 315.385 V312.885 A3.6 3.6 0 0 1 1238.0 312.885 V315.385" fill="none" stroke="#3e9b3e" stroke-width="2.2"/><rect x="1228.4" y="314.885" width="12" height="8.5" rx="1.6" fill="#3e9b3e"/><text x="1251.9" y="320.46999999999997" font-size="11.65" fill="#5a5a5a">Устройство буронабивных свай захватка 2</text><circle cx="1183" cy="336.215" r="7" fill="#5252f4"/><path d="M1215 342.215 V331.215 Q1219 329.215 1221 332.215 Q1224 334.215 1226 332.215 V339.215 Q1223 341.215 1221 338.215 Q1218 336.215 1215 338.215" fill="#4a4af0" stroke="#4a4af0" stroke-width="1.3"/><path d="M1230.8000000000002 335.215 V332.715 A3.6 3.6 0 0 1 1238.0 332.715 V335.215" fill="none" stroke="#3e9b3e" stroke-width="2.2"/><rect x="1228.4" y="334.715" width="12" height="8.5" rx="1.6" fill="#3e9b3e"/><text x="1256.3" y="340.29999999999995" font-size="11.65" fill="#5a5a5a">Устройство буронабивных свай захватка 3</text><circle cx="1187" cy="356.045" r="7" fill="#5252f4"/><path d="M1217 362.045 V351.045 Q1221 349.045 1223 352.045 Q1226 354.045 1228 352.045 V359.045 Q1225 361.045 1223 358.045 Q1220 356.045 1217 358.045" fill="#4a4af0" stroke="#4a4af0" stroke-width="1.3"/><path d="M1230.8000000000002 355.045 V352.545 A3.6 3.6 0 0 1 1238.0 352.545 V355.045" fill="none" stroke="#3e9b3e" stroke-width="2.2"/><rect x="1228.4" y="354.545" width="12" height="8.5" rx="1.6" fill="#3e9b3e"/><text x="1259.8" y="360.13" font-size="11.65" fill="#5a5a5a">Устройство буронабивных свай захватка 4</text><circle cx="1190" cy="375.875" r="7" fill="#5252f4"/><path d="M1230.8000000000002 374.875 V372.375 A3.6 3.6 0 0 1 1238.0 372.375 V374.875" fill="none" stroke="#3e9b3e" stroke-width="2.2"/><rect x="1228.4" y="374.375" width="12" height="8.5" rx="1.6" fill="#3e9b3e"/><text x="1269.9" y="379.96" font-size="11.65" fill="#5a5a5a">Устройство фундаментной плиты</text><path d="M1214 247.06499999999997 L1214 302.055 L1221 302.055" fill="none" stroke="#000" stroke-width="1.4"/><path d="M1220 298.055 L1227 302.055 L1220 306.055 Z" fill="#000"/><rect x="1228.0" y="290.055" width="3" height="3" fill="none" stroke="#8c8c8c" stroke-width="1.1"/><rect x="1227.5" y="298.055" width="2.5" height="6.5" fill="#25c0a0"/><rect x="1227.5" y="298.055" width="1.8" height="6.5" fill="#1e70ea"/><rect x="1232.5" y="309.885" width="3" height="3" fill="none" stroke="#8c8c8c" stroke-width="1.1"/><rect x="1232" y="317.885" width="2.5" height="6.5" fill="#25c0a0"/><rect x="1232" y="317.885" width="1.8" height="6.5" fill="#1e70ea"/><rect x="1236.5" y="329.715" width="3" height="3" fill="none" stroke="#8c8c8c" stroke-width="1.1"/><rect x="1236" y="337.715" width="2.5" height="6.5" fill="#25c0a0"/><rect x="1236" y="337.715" width="1.8" height="6.5" fill="#1e70ea"/><rect x="1240.5" y="349.545" width="3" height="3" fill="none" stroke="#8c8c8c" stroke-width="1.1"/><rect x="1240" y="357.545" width="2.5" height="6.5" fill="#25c0a0"/><rect x="1240" y="357.545" width="1.8" height="6.5" fill="#1e70ea"/><path d="M1230 304.555 L1230 306.555 L1218.2 306.555 L1218.2 321.885 L1227 321.885" fill="none" stroke="#000" stroke-width="1.4"/><path d="M1225 317.885 L1232 321.885 L1225 325.885 Z" fill="#000"/><path d="M1234 324.385 L1234 326.385 L1222 326.385 L1222 341.715 L1231 341.715" fill="none" stroke="#000" stroke-width="1.4"/><path d="M1229 337.715 L1236 341.715 L1229 345.715 Z" fill="#000"/><path d="M1238 344.215 L1238 346.215 L1225.7 346.215 L1225.7 361.545 L1235 361.545" fill="none" stroke="#000" stroke-width="1.4"/><path d="M1233 357.545 L1240 361.545 L1233 365.545 Z" fill="#000"/><path d="M1242 364.045 L1242 366.045 L1229.4 366.045 L1229.4 381.375 L1238.7 381.375" fill="none" stroke="#000" stroke-width="1.4"/><path d="M1236.7 377.375 L1243.7 381.375 L1236.7 385.375 Z" fill="#000"/><rect x="1244.2" y="369.375" width="6.2999999999999545" height="3" fill="none" stroke="#8c8c8c" stroke-width="1.1"/><rect x="1243.7" y="377.375" width="7.2999999999999545" height="6.5" fill="#25c0a0"/><rect x="1243.7" y="377.375" width="1.8" height="6.5" fill="#1e70ea"/><path d="M1252.5 388.78999999999996 H1273 V394.28999999999996 L1269.5 391.78999999999996 H1256.0 L1252.5 394.28999999999996 Z" fill="#a9a9ab"/><path d="M1252.5 396.78999999999996 H1273 V402.78999999999996 L1269 399.78999999999996 H1256.5 L1252.5 402.78999999999996 Z" fill="#000"/><text x="1290.8" y="399.78999999999996" font-size="10.6" font-weight="bold" fill="#3a3a3a">Монолитные работы подземной части</text><circle cx="1200" cy="415.535" r="7" fill="#5252f4"/><path d="M1230.8000000000002 414.535 V412.035 A3.6 3.6 0 0 1 1238.0 412.035 V414.535" fill="none" stroke="#3e9b3e" stroke-width="2.2"/><rect x="1228.4" y="414.035" width="12" height="8.5" rx="1.6" fill="#3e9b3e"/><text x="1273.7" y="419.62" font-size="11.65" fill="#5a5a5a">Устройство монолитных стен цокольного этажа</text><circle cx="1204" cy="435.365" r="7" fill="#5252f4"/><path d="M1230.8000000000002 434.365 V431.865 A3.6 3.6 0 0 1 1238.0 431.865 V434.365" fill="none" stroke="#3e9b3e" stroke-width="2.2"/><rect x="1228.4" y="433.865" width="12" height="8.5" rx="1.6" fill="#3e9b3e"/><text x="1283.2" y="439.45" font-size="11.65" fill="#5a5a5a">Устройство монолитного перекрытия цокольного этажа</text><circle cx="1218" cy="455.195" r="7" fill="#5252f4"/><path d="M1230.8000000000002 454.195 V451.695 A3.6 3.6 0 0 1 1238.0 451.695 V454.195" fill="none" stroke="#3e9b3e" stroke-width="2.2"/><rect x="1228.4" y="453.695" width="12" height="8.5" rx="1.6" fill="#3e9b3e"/><text x="1291.1" y="459.28" font-size="11.65" fill="#5a5a5a">Устройство монолитной входной лестницы</text><path d="M1251 383.875 L1251 385.875 L1239.6 385.875 L1239.6 421.035 L1248 421.035" fill="none" stroke="#000" stroke-width="1.4"/><path d="M1246.5 417.035 L1253.5 421.035 L1246.5 425.035 Z" fill="#000"/><rect x="1254.3" y="409.035" width="3" height="3" fill="none" stroke="#8c8c8c" stroke-width="1.1"/><rect x="1253.8" y="417.035" width="2.7000000000000455" height="6.5" fill="#25c0a0"/><rect x="1253.8" y="417.035" width="1.8" height="6.5" fill="#1e70ea"/><path d="M1256.5 423.535 L1256.5 425.535 L1243.3 425.535 L1243.3 440.865 L1251 440.865" fill="none" stroke="#000" stroke-width="1.4"/><path d="M1249.3 436.865 L1256.3 440.865 L1249.3 444.865 Z" fill="#000"/><rect x="1257.0" y="428.865" width="7.5" height="3" fill="none" stroke="#8c8c8c" stroke-width="1.1"/><rect x="1256.5" y="436.865" width="8.5" height="6.5" fill="#25c0a0"/><rect x="1256.5" y="436.865" width="1.8" height="6.5" fill="#1e70ea"/><path d="M1265 443.365 L1265 445.365 L1253.5 445.365 L1253.5 500.35499999999996 L1262 500.35499999999996" fill="none" stroke="#000" stroke-width="1.4"/><path d="M1260.4 496.35499999999996 L1267.4 500.35499999999996 L1260.4 504.35499999999996 Z" fill="#000"/><path d="M1257 445.365 L1257 478.025 L1268.7 478.025 L1268.7 493.85499999999996" fill="none" stroke="#000" stroke-width="1.4"/><path d="M1257 460.695 L1265 460.695" fill="none" stroke="#000" stroke-width="1.4"/><path d="M1264 456.695 L1271 460.695 L1264 464.695 Z" fill="#000"/><rect x="1271.5" y="448.695" width="3" height="3" fill="none" stroke="#8c8c8c" stroke-width="1.1"/><rect x="1271" y="456.695" width="2.5" height="6.5" fill="#25c0a0"/><rect x="1271" y="456.695" width="1.8" height="6.5" fill="#1e70ea"/><path d="M1273.5 460.695 L1279 460.695" fill="none" stroke="#000" stroke-width="1.4"/><path d="M1277.5 456.695 L1284.5 460.695 L1277.5 464.695 Z" fill="#000"/><path d="M1285 456.695 V464.695" stroke="#000" stroke-width="1.5"/><path d="M1266 468.10999999999996 H1320 V473.60999999999996 L1316.5 471.10999999999996 H1269.5 L1266 473.60999999999996 Z" fill="#a9a9ab"/><path d="M1266 476.10999999999996 H1318 V482.10999999999996 L1314 479.10999999999996 H1270 L1266 482.10999999999996 Z" fill="#000"/><text x="1338" y="479.10999999999996" font-size="10.6" font-weight="bold" fill="#3a3a3a">Монолитные работы надземной части</text><circle cx="1214" cy="494.85499999999996" r="7" fill="#5252f4"/><path d="M1230.8000000000002 493.85499999999996 V491.35499999999996 A3.6 3.6 0 0 1 1238.0 491.35499999999996 V493.85499999999996" fill="none" stroke="#3e9b3e" stroke-width="2.2"/><rect x="1228.4" y="493.35499999999996" width="12" height="8.5" rx="1.6" fill="#3e9b3e"/><text x="1287.3" y="498.93999999999994" font-size="11.65" fill="#5a5a5a">Устройство наружных монолитных стен 1-го этажа</text><circle cx="1214" cy="514.685" r="7" fill="#5252f4"/><path d="M1230.8000000000002 513.685 V511.18499999999995 A3.6 3.6 0 0 1 1238.0 511.18499999999995 V513.685" fill="none" stroke="#3e9b3e" stroke-width="2.2"/><rect x="1228.4" y="513.185" width="12" height="8.5" rx="1.6" fill="#3e9b3e"/><text x="1287.3" y="518.77" font-size="11.65" fill="#5a5a5a">Устройство внутренних монолитных стен 1-го этажа</text><circle cx="1218" cy="534.5149999999999" r="7" fill="#5252f4"/><path d="M1230.8000000000002 533.5149999999999 V531.0149999999999 A3.6 3.6 0 0 1 1238.0 531.0149999999999 V533.5149999999999" fill="none" stroke="#3e9b3e" stroke-width="2.2"/><rect x="1228.4" y="533.0149999999999" width="12" height="8.5" rx="1.6" fill="#3e9b3e"/><text x="1299" y="538.5999999999999" font-size="11.65" fill="#5a5a5a">Устройство монолитной лестницы 1-го этажа</text><path d="M1230.8000000000002 553.3449999999999 V550.8449999999999 A3.6 3.6 0 0 1 1238.0 550.8449999999999 V553.3449999999999" fill="none" stroke="#3e9b3e" stroke-width="2.2"/><rect x="1228.4" y="552.8449999999999" width="12" height="8.5" rx="1.6" fill="#3e9b3e"/><circle cx="1230" cy="554.3449999999999" r="7" fill="rgba(60,60,240,0.85)"/><text x="1304.8" y="558.43" font-size="11.65" fill="#5a5a5a">Устройство монолитного перекрытия 1-го этажа</text><path d="M1231.4 573.175 V570.675 A3.6 3.6 0 0 1 1238.6 570.675 V573.175" fill="none" stroke="#1a1ae8" stroke-width="2.2"/><rect x="1229" y="572.675" width="12" height="8.5" rx="1.6" fill="#1a1ae8"/><circle cx="1235" cy="574.175" r="7" fill="rgba(20,20,235,0.92)"/><text x="1308.9" y="578.26" font-size="11.65" fill="#5a5a5a">Устройство наружных монолитных стен 2-го этажа</text><circle cx="1236" cy="594.0049999999999" r="7" fill="#1a1ae8"/><rect x="1267.9" y="488.35499999999996" width="3" height="3" fill="none" stroke="#8c8c8c" stroke-width="1.1"/><rect x="1267.4" y="496.35499999999996" width="2.5" height="6.5" fill="#25c0a0"/><rect x="1267.4" y="496.35499999999996" width="1.8" height="6.5" fill="#1e70ea"/><rect x="1267.9" y="508.18499999999995" width="3" height="3" fill="none" stroke="#8c8c8c" stroke-width="1.1"/><rect x="1267.4" y="516.185" width="2.5" height="6.5" fill="#25c0a0"/><rect x="1267.4" y="516.185" width="1.8" height="6.5" fill="#1e70ea"/><rect x="1270.5" y="528.0149999999999" width="9" height="3" fill="none" stroke="#8c8c8c" stroke-width="1.1"/><rect x="1270" y="536.0149999999999" width="10" height="6.5" fill="#1e78e0"/><rect x="1270" y="536.0149999999999" width="1.8" height="6.5" fill="#1e70ea"/><rect x="1282.8" y="547.8449999999999" width="3" height="3" fill="none" stroke="#8c8c8c" stroke-width="1.1"/><rect x="1282.3" y="555.8449999999999" width="3.7000000000000455" height="6.5" fill="#25c0a0"/><rect x="1282.3" y="555.8449999999999" width="1.8" height="6.5" fill="#1e70ea"/><rect x="1288.9" y="567.675" width="3" height="3" fill="none" stroke="#8c8c8c" stroke-width="1.1"/><rect x="1288.4" y="575.675" width="2.5" height="6.5" fill="#1e70ea"/><rect x="1288.4" y="575.675" width="1.8" height="6.5" fill="#1e70ea"/><rect x="1277.5" y="536.0149999999999" width="2.5" height="6.5" fill="#25c0a0"/><path d="M1269.5 502.85499999999996 L1269.5 504.85499999999996 L1253.5 504.85499999999996 L1253.5 520.185 L1262 520.185" fill="none" stroke="#000" stroke-width="1.4"/><path d="M1260.4 516.185 L1267.4 520.185 L1260.4 524.185 Z" fill="#000"/><path d="M1269.5 522.685 L1269.5 524.685 L1257.2 524.685 L1257.2 540.0149999999999 L1265 540.0149999999999" fill="none" stroke="#000" stroke-width="1.4"/><path d="M1263 536.0149999999999 L1270 540.0149999999999 L1263 544.0149999999999 Z" fill="#000"/><path d="M1280 542.5149999999999 L1280 544.5149999999999 L1269.3 544.5149999999999 L1269.3 559.8449999999999 L1277 559.8449999999999" fill="none" stroke="#000" stroke-width="1.4"/><path d="M1275.3 555.8449999999999 L1282.3 559.8449999999999 L1275.3 563.8449999999999 Z" fill="#000"/><path d="M1286 562.3449999999999 L1286 564.3449999999999 L1274.5 564.3449999999999 L1274.5 579.675 L1283 579.675" fill="none" stroke="#000" stroke-width="1.4"/><path d="M1281.4 575.675 L1288.4 579.675 L1281.4 583.675 Z" fill="#000"/><path d="M1290.5 582.175 L1290.5 584.175 L1276 584.175 L1276 599.5049999999999" fill="none" stroke="#000" stroke-width="1.4"/><path d="M1213.6 128 V589" stroke="#f2344a" stroke-width="2" stroke-dasharray="5 3"/><path d="M1209.5 127.5 H1218 L1213.7 134 Z" fill="#f2344a"/><path d="M1502.5 128 V589" stroke="#1f78e0" stroke-width="2" stroke-dasharray="5 3"/><path d="M1498 127.5 H1507 L1502.5 134 Z" fill="#1f78e0"/><text transform="translate(1217.5 131) rotate(90)" font-size="10" fill="#8c8c8c">Дата актуализации</text><text transform="translate(1506.5 131) rotate(90)" font-size="10" fill="#8c8c8c">Текущая дата</text></svg>
</div>
<div style="position:absolute;left:1915px;top:127px;width:3px;height:462px;background:#f2f2f4"></div>
<div style="position:absolute;left:41px;top:589px;width:1877px;height:4px;background:#b4b5bb"></div>
<div style="position:absolute;left:41px;top:593px;width:1877px;height:48px;background:#fff"></div>
<div style="position:absolute;left:41px;top:641px;width:1877px;height:1px;background:#c9cacf"></div>
<div style="position:absolute;left:95.2px;top:605px;height:20px;line-height:20px;white-space:nowrap;font-size:15.6px;color:#333">Карточка работы</div>
<div style="position:absolute;left:328.3px;top:605px;height:20px;line-height:20px;white-space:nowrap;font-size:15.6px;color:#333">Связи работы</div>
<div style="position:absolute;left:538px;top:605px;height:20px;line-height:20px;white-space:nowrap;font-size:15.6px;color:#2f80d3">Связанные графики</div>
<div style="position:absolute;left:792.2px;top:605px;height:20px;line-height:20px;white-space:nowrap;font-size:15.6px;color:#333">Справочники</div>
<div style="position:absolute;left:998px;top:605px;height:20px;line-height:20px;white-space:nowrap;font-size:15.6px;color:#333">Суточное планирование</div>
<div style="position:absolute;left:1283.6px;top:605px;height:20px;line-height:20px;white-space:nowrap;font-size:15.6px;color:#333">Фото / Документация</div>
<div style="position:absolute;left:1549.6px;top:605px;height:20px;line-height:20px;white-space:nowrap;font-size:15.6px;color:#333">Запросы и поручения</div>
<div style="position:absolute;left:1816.2px;top:605px;height:20px;line-height:20px;white-space:nowrap;font-size:15.6px;color:#333">Табели</div>
<div style="position:absolute;left:483px;top:631.5px;width:254px;height:2.2px;background:#2f80d3"></div>
<div style="position:absolute;left:41px;top:642px;width:1877px;height:39px;background:#efeff2"></div>
<div style="position:absolute;left:41px;top:681px;width:1877px;height:1px;background:#c9cacf"></div>
<svg style="position:absolute;left:55px;top:657px;overflow:visible" width="12" height="8" viewBox="0 0 12 8" fill="none" stroke="#47474d" stroke-width="1.7" stroke-linecap="round" stroke-linejoin="round" ><path d="M1 1 H11 L6 6.5 Z" fill="#47474d" stroke="none"/></svg>
<div style="position:absolute;left:87px;top:654px;width:73px;height:15px;background:#1f78d1;border-radius:3px;color:#fff;font-size:11.2px;line-height:15px;text-align:center;white-space:nowrap">Актуальная</div>
<div style="position:absolute;left:163px;top:654px;width:67px;height:15px;background:#1f78d1;border-radius:3px;color:#fff;font-size:11.2px;line-height:15px;text-align:center;white-space:nowrap">15.09.2025</div>
<div style="position:absolute;left:234px;top:652.5px;height:18px;line-height:18px;white-space:nowrap;font-size:13.4px;color:#1e1e1e">Авансирование - Актуальная</div>
<div style="position:absolute;left:1288.6px;top:652.5px;height:18px;line-height:18px;white-space:nowrap;font-size:13.2px;color:#1e1e1e">Связь графиков:</div>
<div style="position:absolute;left:1398px;top:645px;width:310px;height:32px;background:#fff;border:1px solid #c9c9cf;border-radius:3px"></div>
<div style="position:absolute;left:1409px;top:652.5px;height:18px;line-height:18px;white-space:nowrap;font-size:13.4px;color:#1e1e1e">СМР-Аванс</div>
<div style="position:absolute;left:1566.5px;top:653.5px;width:107px;height:15.5px;background:#1f8ae6;border-radius:3px;color:#fff;font-size:11px;line-height:15.5px;text-align:center;white-space:nowrap">Обеспечивающий</div>
<svg style="position:absolute;left:1681px;top:657px;overflow:visible" width="12" height="8" viewBox="0 0 12 8" fill="none" stroke="#47474d" stroke-width="1.7" stroke-linecap="round" stroke-linejoin="round" ><path d="M1 1 H10 L5.5 5.5 Z" fill="#47474d" stroke="none"/></svg>
<svg style="position:absolute;left:1722px;top:649px;overflow:visible" width="24" height="24" viewBox="0 0 24 24" fill="none" stroke="#47474d" stroke-width="1.8" stroke-linecap="round" stroke-linejoin="round" ><circle cx="10" cy="10" r="8"/><path d="M16 16 L22 22"/></svg>
<svg style="position:absolute;left:1762px;top:649px;overflow:visible" width="25" height="24" viewBox="0 0 25 24" fill="none" stroke="#47474d" stroke-width="1.8" stroke-linecap="round" stroke-linejoin="round" ><path d="M1.5 12 Q12.5 3 23.5 12 Q12.5 21 1.5 12 Z"/><circle cx="12.5" cy="12" r="2.7"/></svg>
<div style="position:absolute;left:1820px;top:642px;width:1px;height:39px;background:#b9bac1"></div>
<svg style="position:absolute;left:1826px;top:653px;overflow:visible" width="18" height="18" viewBox="0 0 18 18" fill="none" stroke="#47474d" stroke-width="1.6" stroke-linecap="round" stroke-linejoin="round" ><path d="M1.5 2 H16 L10.5 9 V16 L7 14 V9 Z"/></svg>
<div style="position:absolute;left:1849px;top:652.5px;height:18px;line-height:18px;white-space:nowrap;font-size:13.4px;color:#1e1e1e">1 / 6</div>
<svg style="position:absolute;left:1888px;top:649px;overflow:visible" width="26" height="26" viewBox="0 0 26 26" fill="none" stroke="#47474d" stroke-width="1.8" stroke-linecap="round" stroke-linejoin="round" ><path d="M2 14 L10 22 M10 14 L2 22"/><path d="M14 2 H22 L19 6 V9.5 L17 8.5 V6 Z" stroke-width="1.3"/></svg>
<div style="position:absolute;left:41px;top:682px;width:1877px;height:233px;background:#fff"></div>
<div style="position:absolute;left:41px;top:726px;width:1877px;height:1px;background:#d9d9dd"></div>
<div style="position:absolute;left:59px;top:682px;width:1px;height:45px;background:#c8c9cf"></div>
<div style="position:absolute;left:150px;top:682px;width:1px;height:45px;background:#c8c9cf"></div>
<div style="position:absolute;left:59px;top:695px;width:91px;height:18px;line-height:18px;white-space:nowrap;font-size:11.2px;color:#222;text-align:center">Шифр</div>
<div style="position:absolute;left:366px;top:682px;width:1px;height:45px;background:#c8c9cf"></div>
<div style="position:absolute;left:150px;top:695px;width:216px;height:18px;line-height:18px;white-space:nowrap;font-size:11.2px;color:#222;text-align:center">Наименование</div>
<div style="position:absolute;left:456px;top:682px;width:1px;height:45px;background:#c8c9cf"></div>
<div style="position:absolute;left:366px;top:695px;width:90px;height:18px;line-height:18px;white-space:nowrap;font-size:11.2px;color:#222;text-align:center">Старт</div>
<div style="position:absolute;left:546px;top:682px;width:1px;height:45px;background:#c8c9cf"></div>
<div style="position:absolute;left:456px;top:695px;width:90px;height:18px;line-height:18px;white-space:nowrap;font-size:11.2px;color:#222;text-align:center">Финиш</div>
<div style="position:absolute;left:636px;top:682px;width:1px;height:45px;background:#c8c9cf"></div>
<div style="position:absolute;left:546px;top:695px;width:90px;height:18px;line-height:18px;white-space:nowrap;font-size:11.2px;color:#222;text-align:center">Прогресс</div>
<div style="position:absolute;left:726px;top:682px;width:1px;height:45px;background:#c8c9cf"></div>
<div style="position:absolute;left:637px;top:691.5px;width:89px;height:28px;overflow:hidden;font-size:11.5px;line-height:13.5px;color:#222;white-space:nowrap"><div style="position:absolute;left:1.5px;top:0">Обеспеченность</div><div style="position:absolute;left:0;width:100%;top:13.5px;text-align:center">авансом</div></div>
<div style="position:absolute;left:636px;top:727px;width:90px;height:19px;background:#efefef"></div>
<div style="position:absolute;left:59px;top:746px;width:667px;height:1px;background-image:linear-gradient(90deg,#bdbdc1 3px,transparent 3px);background-size:5px 1px"></div>
<div style="position:absolute;left:59px;top:727px;width:1px;height:19px;background-image:linear-gradient(180deg,#c6c6ca 3px,transparent 3px);background-size:1px 5px"></div>
<div style="position:absolute;left:150px;top:727px;width:1px;height:19px;background-image:linear-gradient(180deg,#c6c6ca 3px,transparent 3px);background-size:1px 5px"></div>
<div style="position:absolute;left:366px;top:727px;width:1px;height:19px;background-image:linear-gradient(180deg,#c6c6ca 3px,transparent 3px);background-size:1px 5px"></div>
<div style="position:absolute;left:456px;top:727px;width:1px;height:19px;background-image:linear-gradient(180deg,#c6c6ca 3px,transparent 3px);background-size:1px 5px"></div>
<div style="position:absolute;left:546px;top:727px;width:1px;height:19px;background-image:linear-gradient(180deg,#c6c6ca 3px,transparent 3px);background-size:1px 5px"></div>
<div style="position:absolute;left:636px;top:727px;width:1px;height:19px;background-image:linear-gradient(180deg,#c6c6ca 3px,transparent 3px);background-size:1px 5px"></div>
<div style="position:absolute;left:726px;top:727px;width:1px;height:19px;background-image:linear-gradient(180deg,#c6c6ca 3px,transparent 3px);background-size:1px 5px"></div>
<div style="position:absolute;left:41px;top:727px;width:18px;height:19px;line-height:19px;white-space:nowrap;font-size:8.5px;color:#222;text-align:center">1</div>
<div style="position:absolute;left:64px;top:727px;height:19px;line-height:19px;white-space:nowrap;font-size:11.5px;color:#222">2</div>
<div style="position:absolute;left:154px;top:727px;height:19px;line-height:19px;white-space:nowrap;font-size:11.3px;color:#222">Транш 2: Общестроительные работы</div>
<div style="position:absolute;left:366px;top:727px;width:90px;height:19px;line-height:19px;white-space:nowrap;font-size:11.5px;color:#222;text-align:center">06.05.2025</div>
<div style="position:absolute;left:546px;top:727px;width:87px;height:19px;line-height:19px;white-space:nowrap;font-size:11.5px;color:#222;text-align:right">100</div>
<svg style="position:absolute;left:674.80px;top:728.30px" width="13.00" height="16.00" viewBox="0 0 13 16"><path d="M3.3 7 V4.8 A3.2 3.2 0 0 1 9.7 4.8 V7" fill="none" stroke="#f0141e" stroke-width="2.1"/><rect x="0.5" y="6.8" width="12" height="8.7" rx="1.6" fill="#f0141e"/></svg>
</body></html>
